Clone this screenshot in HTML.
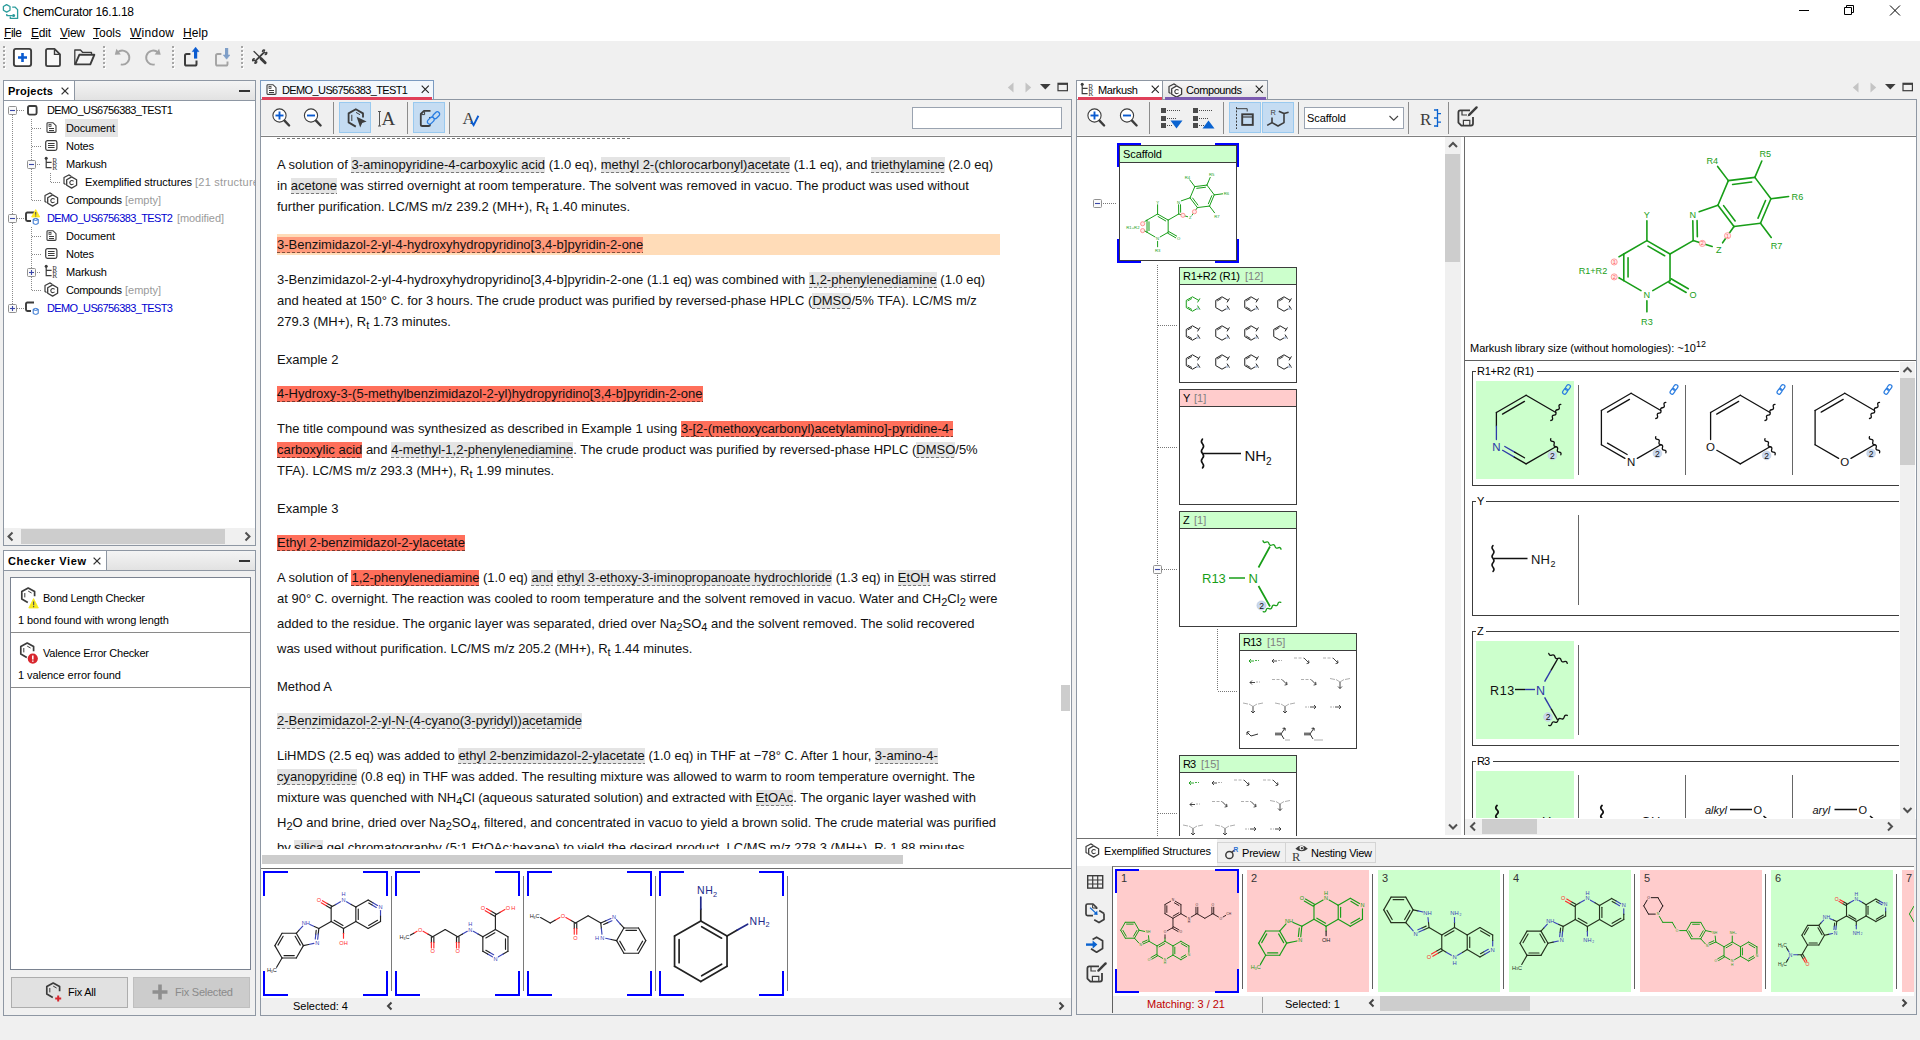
<!DOCTYPE html><html><head><meta charset="utf-8"><title>ChemCurator 16.1.18</title><style>
html,body{margin:0;padding:0}
body{width:1920px;height:1040px;background:#f0f0f0;position:relative;overflow:hidden;font-family:"Liberation Sans",sans-serif;font-size:11px;color:#000}
.b{position:absolute;box-sizing:border-box}
.t{position:absolute;white-space:nowrap;line-height:normal}
svg{overflow:visible}

.dl{position:absolute;left:277px;white-space:nowrap;font-size:13px;line-height:15px;height:15px;color:#111}
.dl span.g,.dl span.r,.dl span.s{padding-bottom:1px;background-repeat:repeat-x;background-position:0 100%;background-size:5px 1px}
.dl span.g{background-color:#e4e4e4;background-image:linear-gradient(90deg,#777 0,#777 3px,transparent 3px)}
.dl span.r{background-color:#ff6f5b;background-image:linear-gradient(90deg,#7a3a30 0,#7a3a30 3px,transparent 3px)}
.dl span.s{background-color:#ff9b7c;background-image:linear-gradient(90deg,#80503c 0,#80503c 3px,transparent 3px)}
.dl sub{font-size:11px;position:relative;top:3px;vertical-align:baseline;line-height:0}

</style></head><body>
<!-- p_top -->
<div class="b" style="left:0px;top:0px;width:1920px;height:41px;background:#ffffff;"></div>
<svg class="b" style="left:2px;top:3px;" width="17" height="17" viewBox="0 0 17 17"><g fill="none" stroke="#2b9c9c" stroke-width="1.3" stroke-linejoin="round">
<path d="M4.6 1.6 L8 3.5 V7.2 L4.6 9.1 L1.4 7.2 V3.5 Z"/>
<path d="M10.2 4.2 H13.2 L15.6 6.6 V15.4 H8.3 V13.6"/>
<path d="M4.8 11 V12.6 H10.6"/></g><circle cx="11.6" cy="12.6" r="1.5" fill="#2b9c9c"/></svg>
<div class="t" style="left:23px;top:5px;font-size:12px;letter-spacing:-0.243px;">ChemCurator 16.1.18</div>
<svg class="b" style="left:1795px;top:0px;" width="120" height="22" viewBox="0 0 120 22"><g fill="none" stroke="#000" stroke-width="1">
<path d="M4 10.5 H14"/>
<path d="M49.5 7.5 H56.5 V14.5 H49.5 Z M51.5 7.5 V5.5 H58.5 V12.5 H56.5"/>
<path d="M95 5.5 L105 15.5 M105 5.5 L95 15.5"/></g></svg>
<div class="t" style="left:4px;top:26px;font-size:12px;letter-spacing:-0.448px;"><span style="text-decoration:underline;text-underline-offset:1px">F</span>ile</div>
<div class="t" style="left:31px;top:26px;font-size:12px;letter-spacing:-0.224px;"><span style="text-decoration:underline;text-underline-offset:1px">E</span>dit</div>
<div class="t" style="left:60px;top:26px;font-size:12px;letter-spacing:-0.266px;"><span style="text-decoration:underline;text-underline-offset:1px">V</span>iew</div>
<div class="t" style="left:93px;top:26px;font-size:12px;letter-spacing:-0.004px;"><span style="text-decoration:underline;text-underline-offset:1px">T</span>ools</div>
<div class="t" style="left:130px;top:26px;font-size:12px;letter-spacing:0.263px;"><span style="text-decoration:underline;text-underline-offset:1px">W</span>indow</div>
<div class="t" style="left:183px;top:26px;font-size:12px;letter-spacing:0.104px;"><span style="text-decoration:underline;text-underline-offset:1px">H</span>elp</div>
<div class="b" style="left:3px;top:46px;width:2px;height:2px;background:#a0a0a0;"></div><div class="b" style="left:4px;top:47px;width:2px;height:2px;background:#ffffff;"></div><div class="b" style="left:3px;top:46px;width:2px;height:2px;background:#a6a6a6;"></div><div class="b" style="left:3px;top:50px;width:2px;height:2px;background:#a0a0a0;"></div><div class="b" style="left:4px;top:51px;width:2px;height:2px;background:#ffffff;"></div><div class="b" style="left:3px;top:50px;width:2px;height:2px;background:#a6a6a6;"></div><div class="b" style="left:3px;top:54px;width:2px;height:2px;background:#a0a0a0;"></div><div class="b" style="left:4px;top:55px;width:2px;height:2px;background:#ffffff;"></div><div class="b" style="left:3px;top:54px;width:2px;height:2px;background:#a6a6a6;"></div><div class="b" style="left:3px;top:58px;width:2px;height:2px;background:#a0a0a0;"></div><div class="b" style="left:4px;top:59px;width:2px;height:2px;background:#ffffff;"></div><div class="b" style="left:3px;top:58px;width:2px;height:2px;background:#a6a6a6;"></div><div class="b" style="left:3px;top:62px;width:2px;height:2px;background:#a0a0a0;"></div><div class="b" style="left:4px;top:63px;width:2px;height:2px;background:#ffffff;"></div><div class="b" style="left:3px;top:62px;width:2px;height:2px;background:#a6a6a6;"></div><div class="b" style="left:3px;top:66px;width:2px;height:2px;background:#a0a0a0;"></div><div class="b" style="left:4px;top:67px;width:2px;height:2px;background:#ffffff;"></div><div class="b" style="left:3px;top:66px;width:2px;height:2px;background:#a6a6a6;"></div>
<div class="b" style="left:103px;top:46px;width:2px;height:2px;background:#a0a0a0;"></div><div class="b" style="left:104px;top:47px;width:2px;height:2px;background:#ffffff;"></div><div class="b" style="left:103px;top:46px;width:2px;height:2px;background:#a6a6a6;"></div><div class="b" style="left:103px;top:50px;width:2px;height:2px;background:#a0a0a0;"></div><div class="b" style="left:104px;top:51px;width:2px;height:2px;background:#ffffff;"></div><div class="b" style="left:103px;top:50px;width:2px;height:2px;background:#a6a6a6;"></div><div class="b" style="left:103px;top:54px;width:2px;height:2px;background:#a0a0a0;"></div><div class="b" style="left:104px;top:55px;width:2px;height:2px;background:#ffffff;"></div><div class="b" style="left:103px;top:54px;width:2px;height:2px;background:#a6a6a6;"></div><div class="b" style="left:103px;top:58px;width:2px;height:2px;background:#a0a0a0;"></div><div class="b" style="left:104px;top:59px;width:2px;height:2px;background:#ffffff;"></div><div class="b" style="left:103px;top:58px;width:2px;height:2px;background:#a6a6a6;"></div><div class="b" style="left:103px;top:62px;width:2px;height:2px;background:#a0a0a0;"></div><div class="b" style="left:104px;top:63px;width:2px;height:2px;background:#ffffff;"></div><div class="b" style="left:103px;top:62px;width:2px;height:2px;background:#a6a6a6;"></div><div class="b" style="left:103px;top:66px;width:2px;height:2px;background:#a0a0a0;"></div><div class="b" style="left:104px;top:67px;width:2px;height:2px;background:#ffffff;"></div><div class="b" style="left:103px;top:66px;width:2px;height:2px;background:#a6a6a6;"></div>
<div class="b" style="left:172px;top:46px;width:2px;height:2px;background:#a0a0a0;"></div><div class="b" style="left:173px;top:47px;width:2px;height:2px;background:#ffffff;"></div><div class="b" style="left:172px;top:46px;width:2px;height:2px;background:#a6a6a6;"></div><div class="b" style="left:172px;top:50px;width:2px;height:2px;background:#a0a0a0;"></div><div class="b" style="left:173px;top:51px;width:2px;height:2px;background:#ffffff;"></div><div class="b" style="left:172px;top:50px;width:2px;height:2px;background:#a6a6a6;"></div><div class="b" style="left:172px;top:54px;width:2px;height:2px;background:#a0a0a0;"></div><div class="b" style="left:173px;top:55px;width:2px;height:2px;background:#ffffff;"></div><div class="b" style="left:172px;top:54px;width:2px;height:2px;background:#a6a6a6;"></div><div class="b" style="left:172px;top:58px;width:2px;height:2px;background:#a0a0a0;"></div><div class="b" style="left:173px;top:59px;width:2px;height:2px;background:#ffffff;"></div><div class="b" style="left:172px;top:58px;width:2px;height:2px;background:#a6a6a6;"></div><div class="b" style="left:172px;top:62px;width:2px;height:2px;background:#a0a0a0;"></div><div class="b" style="left:173px;top:63px;width:2px;height:2px;background:#ffffff;"></div><div class="b" style="left:172px;top:62px;width:2px;height:2px;background:#a6a6a6;"></div><div class="b" style="left:172px;top:66px;width:2px;height:2px;background:#a0a0a0;"></div><div class="b" style="left:173px;top:67px;width:2px;height:2px;background:#ffffff;"></div><div class="b" style="left:172px;top:66px;width:2px;height:2px;background:#a6a6a6;"></div>
<div class="b" style="left:241px;top:46px;width:2px;height:2px;background:#a0a0a0;"></div><div class="b" style="left:242px;top:47px;width:2px;height:2px;background:#ffffff;"></div><div class="b" style="left:241px;top:46px;width:2px;height:2px;background:#a6a6a6;"></div><div class="b" style="left:241px;top:50px;width:2px;height:2px;background:#a0a0a0;"></div><div class="b" style="left:242px;top:51px;width:2px;height:2px;background:#ffffff;"></div><div class="b" style="left:241px;top:50px;width:2px;height:2px;background:#a6a6a6;"></div><div class="b" style="left:241px;top:54px;width:2px;height:2px;background:#a0a0a0;"></div><div class="b" style="left:242px;top:55px;width:2px;height:2px;background:#ffffff;"></div><div class="b" style="left:241px;top:54px;width:2px;height:2px;background:#a6a6a6;"></div><div class="b" style="left:241px;top:58px;width:2px;height:2px;background:#a0a0a0;"></div><div class="b" style="left:242px;top:59px;width:2px;height:2px;background:#ffffff;"></div><div class="b" style="left:241px;top:58px;width:2px;height:2px;background:#a6a6a6;"></div><div class="b" style="left:241px;top:62px;width:2px;height:2px;background:#a0a0a0;"></div><div class="b" style="left:242px;top:63px;width:2px;height:2px;background:#ffffff;"></div><div class="b" style="left:241px;top:62px;width:2px;height:2px;background:#a6a6a6;"></div><div class="b" style="left:241px;top:66px;width:2px;height:2px;background:#a0a0a0;"></div><div class="b" style="left:242px;top:67px;width:2px;height:2px;background:#ffffff;"></div><div class="b" style="left:241px;top:66px;width:2px;height:2px;background:#a6a6a6;"></div>
<svg class="b" style="left:10px;top:44px;" width="270" height="28" viewBox="0 0 270 28">
<rect x="3.9" y="4.9" width="17.2" height="17.2" rx="2" fill="#fff" stroke="#3c3c3c" stroke-width="1.9"/>
<path d="M8 13.5 H17 M12.5 9 V18" stroke="#0a5bd0" stroke-width="2.6" fill="none"/>
<path d="M36 6.5 Q36 4.9 37.6 4.9 H44.5 L50 10.4 V20.5 Q50 22.1 48.4 22.1 H37.6 Q36 22.1 36 20.5 Z" fill="#f8f8f8" stroke="#3c3c3c" stroke-width="1.8" stroke-linejoin="round"/>
<path d="M44.5 5.5 V10.4 H49.5" fill="none" stroke="#3c3c3c" stroke-width="1.4"/>
<path d="M64.8 20.5 V6 H70.5 L72.5 8.3 H81.5 V10.2" fill="none" stroke="#3c3c3c" stroke-width="1.3" stroke-linejoin="round"/>
<path d="M65.2 20.4 L69.3 10.8 H84.3 L80.3 20.4 Z" fill="#f4f4f4" stroke="#3c3c3c" stroke-width="1.9" stroke-linejoin="round"/>
<path d="M107.4 8.6 A7 7 0 1 1 110.8 20.4" fill="none" stroke="#a3a3a3" stroke-width="1.9"/>
<path d="M104.8 10.8 L110.8 10.6 L106.4 4.8 Z" fill="#a3a3a3"/>
<path d="M148.1 8.6 A7 7 0 1 0 144.7 20.4" fill="none" stroke="#a3a3a3" stroke-width="1.9"/>
<path d="M150.7 10.8 L144.7 10.6 L149.1 4.8 Z" fill="#a3a3a3"/>
<path d="M180.4 10 H176.6 Q175 10 175 11.6 V19.9 Q175 21.5 176.6 21.5 H184.9 Q186.5 21.5 186.5 19.9 V16.6" fill="none" stroke="#3c3c3c" stroke-width="2"/>
<path d="M185.6 14.6 V6" stroke="#0a5bd0" stroke-width="3.2" fill="none"/><path d="M182.3 7.6 L185.6 3.2 L188.9 7.6 Z" fill="#0a5bd0" stroke="#0a5bd0" stroke-width="0.6" stroke-linejoin="round"/>
<path d="M211.4 10 H207.6 Q206 10 206 11.6 V19.9 Q206 21.5 207.6 21.5 H215.9 Q217.5 21.5 217.5 19.9 V17.6" fill="none" stroke="#a3a3a3" stroke-width="1.9"/>
<path d="M216.6 4 V12" stroke="#7f9fc8" stroke-width="3.2" fill="none"/><path d="M213.3 11 L216.6 15.2 L219.9 11 Z" fill="#7f9fc8" stroke="#7f9fc8" stroke-width="0.6" stroke-linejoin="round"/>
<g stroke="#3c3c3c" fill="none" stroke-linecap="round" transform="translate(249.8 12.7) scale(0.87) translate(-250 -12.4)">
<path d="M243.4 6.4 L250.6 13.6" stroke-width="1.5"/><path d="M251.4 14.6 L256.2 19.4" stroke-width="3.3"/>
<path d="M245.6 16.6 L254 8.2" stroke-width="2.1"/>
<path d="M253 6.2 Q253.4 4.2 255.6 4.8 L254.6 7 L256 8.2 L258 7.4 Q258.4 9.6 256.2 10" stroke-width="1.5" stroke-linejoin="round"/>
<path d="M246.6 18.2 Q246.4 20.4 244.2 19.8 L245.2 17.6 L243.8 16.4 L241.8 17.2 Q241.4 15 243.6 14.6" stroke-width="1.5" stroke-linejoin="round"/></g>
</svg>
<!-- p_left -->
<div class="b" style="left:3px;top:80px;width:253px;height:466px;background:#fff;border:1px solid #8e97a3;"></div>
<div class="b" style="left:3px;top:80px;width:253px;height:21px;background:linear-gradient(#f4f4f4,#e2e2e2);border:1px solid #8e97a3;"></div><div class="b" style="left:4px;top:81px;width:71px;height:19px;background:#fff;border-right:1px solid #8e97a3;"></div><div class="t" style="left:8px;top:85px;font-size:11px;letter-spacing:0.223px;font-weight:bold;">Projects</div><svg class="b" style="left:61px;top:87px;" width="8" height="8" viewBox="0 0 8 8"><path d="M0.6 0.6 L7.4 7.4 M7.4 0.6 L0.6 7.4" stroke="#333" stroke-width="1.3" fill="none"/></svg><div class="b" style="left:239px;top:90px;width:11px;height:2px;background:#333;"></div>
<svg class="b" style="left:0px;top:0px;" width="256" height="546" viewBox="0 0 256 546"><path d="M12.5 115 V304" stroke="#8a8a8a" stroke-width="1" stroke-dasharray="1 1" fill="none"/><path d="M17 110.5 H24" stroke="#8a8a8a" stroke-width="1" stroke-dasharray="1 1" fill="none"/><path d="M17 218.5 H24" stroke="#8a8a8a" stroke-width="1" stroke-dasharray="1 1" fill="none"/><path d="M17 308.5 H24" stroke="#8a8a8a" stroke-width="1" stroke-dasharray="1 1" fill="none"/><path d="M31.5 119 V160" stroke="#8a8a8a" stroke-width="1" stroke-dasharray="1 1" fill="none"/><path d="M31.5 169 V200" stroke="#8a8a8a" stroke-width="1" stroke-dasharray="1 1" fill="none"/><path d="M32 128.5 H41" stroke="#8a8a8a" stroke-width="1" stroke-dasharray="1 1" fill="none"/><path d="M32 146.5 H41" stroke="#8a8a8a" stroke-width="1" stroke-dasharray="1 1" fill="none"/><path d="M37 164.5 H41" stroke="#8a8a8a" stroke-width="1" stroke-dasharray="1 1" fill="none"/><path d="M32 200.5 H41" stroke="#8a8a8a" stroke-width="1" stroke-dasharray="1 1" fill="none"/><path d="M50.5 173 V182" stroke="#8a8a8a" stroke-width="1" stroke-dasharray="1 1" fill="none"/><path d="M51 182.5 H61" stroke="#8a8a8a" stroke-width="1" stroke-dasharray="1 1" fill="none"/><path d="M31.5 227 V268" stroke="#8a8a8a" stroke-width="1" stroke-dasharray="1 1" fill="none"/><path d="M31.5 277 V290" stroke="#8a8a8a" stroke-width="1" stroke-dasharray="1 1" fill="none"/><path d="M32 236.5 H41" stroke="#8a8a8a" stroke-width="1" stroke-dasharray="1 1" fill="none"/><path d="M32 254.5 H41" stroke="#8a8a8a" stroke-width="1" stroke-dasharray="1 1" fill="none"/><path d="M37 272.5 H41" stroke="#8a8a8a" stroke-width="1" stroke-dasharray="1 1" fill="none"/><path d="M32 290.5 H41" stroke="#8a8a8a" stroke-width="1" stroke-dasharray="1 1" fill="none"/></svg>
<svg class="b" style="left:8px;top:106px;" width="16" height="16" viewBox="0 0 16 16"><rect x="0.5" y="0.5" width="8" height="8" rx="1" fill="#fafafa" stroke="#919191" stroke-width="1"/><path d="M2 4.5 H7" stroke="#3a46a8" stroke-width="1.1"/></svg>
<svg class="b" style="left:27px;top:105px;" width="16" height="16" viewBox="0 0 16 16"><rect x="1" y="1" width="8.6" height="8.6" rx="1.5" fill="#fff" stroke="#3c3c3c" stroke-width="1.9"/></svg>
<div class="t" style="left:47px;top:104px;font-size:11px;letter-spacing:-0.613px;">DEMO_US6756383_TEST1</div>
<div class="b" style="left:65px;top:119px;width:53px;height:18px;background:#e4e4e4;"></div>
<svg class="b" style="left:46px;top:122px;" width="16" height="16" viewBox="0 0 16 16"><path d="M1 1.6 Q1 0.7 1.9 0.7 H7 L10 3.7 V9.5 Q10 10.4 9.1 10.4 H1.9 Q1 10.4 1 9.5 Z" fill="#fff" stroke="#3c3c3c" stroke-width="1.1"/><path d="M3 6.5 H8 M3 8.5 H8" stroke="#3c3c3c" stroke-width="1"/><rect x="3" y="2.5" width="2" height="2" fill="none" stroke="#3c3c3c" stroke-width="0.8"/></svg>
<div class="t" style="left:66px;top:122px;font-size:11px;letter-spacing:-0.165px;">Document</div>
<svg class="b" style="left:45px;top:140px;" width="16" height="16" viewBox="0 0 16 16"><rect x="0.7" y="0.6" width="11.2" height="9.8" rx="1.8" fill="#fff" stroke="#3c3c3c" stroke-width="1.2"/><path d="M3 3.5 H9.6 M3 5.5 H9.6 M3 7.5 H9.6" stroke="#3c3c3c" stroke-width="1"/></svg>
<div class="t" style="left:66px;top:140px;font-size:11px;letter-spacing:-0.188px;">Notes</div>
<svg class="b" style="left:27px;top:160px;" width="16" height="16" viewBox="0 0 16 16"><rect x="0.5" y="0.5" width="8" height="8" rx="1" fill="#fafafa" stroke="#919191" stroke-width="1"/><path d="M2 4.5 H7" stroke="#3a46a8" stroke-width="1.1"/></svg>
<svg class="b" style="left:44px;top:156px;" width="16" height="16" viewBox="0 0 16 16"><circle cx="2.2" cy="2.2" r="1.5" fill="#3c3c3c"/><path d="M2.2 2.5 V11.6 H7.6 M2.2 6.4 H7.6" fill="none" stroke="#3c3c3c" stroke-width="1.2"/><text x="8.2" y="8.4" font-family="Liberation Serif,serif" font-size="7.5" fill="#3c3c3c">R</text><text x="8.2" y="13.9" font-family="Liberation Serif,serif" font-size="7.5" fill="#3c3c3c">R</text></svg>
<div class="t" style="left:66px;top:158px;font-size:11px;letter-spacing:-0.198px;">Markush</div>
<svg class="b" style="left:63px;top:174px;" width="16" height="16" viewBox="0 0 16 16"><path d="M2.6 10.6 L1 9.6 V3.6 L5.8 0.9 L8.2 2.2" fill="none" stroke="#3c3c3c" stroke-width="1.2" stroke-linejoin="round"/><path d="M8.6 2.9 L13.6 5.7 V11.3 L8.6 14.1 L3.7 11.3 V5.7 Z" fill="#fff" stroke="#3c3c3c" stroke-width="1.3" stroke-linejoin="round"/><path d="M10.6 7.2 Q8.6 5.8 7.2 7.4 Q6.3 8.6 7.2 9.8 Q8.6 11.3 10.6 9.9" fill="none" stroke="#3c3c3c" stroke-width="1.1"/></svg>
<div class="t" style="left:85px;top:176px;font-size:11px;letter-spacing:-0.060px;">Exemplified structures</div>
<div class="b" style="left:195px;top:177px;width:60px;height:14px;overflow:hidden;"><div class="t" style="left:0px;top:-1px;font-size:11px;letter-spacing:0.232px;color:#9a9a9a;">[21 structures]</div></div>
<svg class="b" style="left:44px;top:192px;" width="16" height="16" viewBox="0 0 16 16"><path d="M2.6 10.6 L1 9.6 V3.6 L5.8 0.9 L8.2 2.2" fill="none" stroke="#3c3c3c" stroke-width="1.2" stroke-linejoin="round"/><path d="M8.6 2.9 L13.6 5.7 V11.3 L8.6 14.1 L3.7 11.3 V5.7 Z" fill="#fff" stroke="#3c3c3c" stroke-width="1.3" stroke-linejoin="round"/><path d="M10.6 7.2 Q8.6 5.8 7.2 7.4 Q6.3 8.6 7.2 9.8 Q8.6 11.3 10.6 9.9" fill="none" stroke="#3c3c3c" stroke-width="1.1"/></svg>
<div class="t" style="left:66px;top:194px;font-size:11px;letter-spacing:-0.418px;">Compounds</div>
<div class="t" style="left:125px;top:194px;font-size:11px;letter-spacing:-0.016px;color:#9a9a9a;">[empty]</div>
<svg class="b" style="left:8px;top:214px;" width="16" height="16" viewBox="0 0 16 16"><rect x="0.5" y="0.5" width="8" height="8" rx="1" fill="#fafafa" stroke="#919191" stroke-width="1"/><path d="M2 4.5 H7" stroke="#3a46a8" stroke-width="1.1"/></svg>
<svg class="b" style="left:25px;top:211px;" width="16" height="16" viewBox="0 0 16 16"><path d="M9 1.5 H2.4 Q1 1.5 1 2.9 V8.6 Q1 10 2.4 10 H6" fill="none" stroke="#3c3c3c" stroke-width="1.9"/><path d="M8.2 8.2 Q10.7 6.6 13.2 8.2 V12.6 Q10.7 14.2 8.2 12.6 Z M8.2 8.6 Q10.7 10.2 13.2 8.6" fill="#fff" stroke="#2a6fd0" stroke-width="1"/><path d="M10.7 -1.4 L14.8 6 H6.6 Z" fill="#ffe920" stroke="#ffe920" stroke-width="0.8" stroke-linejoin="round"/><path d="M10.7 1 V3.8 M10.7 4.6 V5.5" stroke="#555" stroke-width="1.1"/></svg>
<div class="t" style="left:47px;top:212px;font-size:11px;letter-spacing:-0.613px;color:#0000d0;">DEMO_US6756383_TEST2</div>
<div class="t" style="left:177px;top:212px;font-size:11px;letter-spacing:-0.080px;color:#9a9a9a;">[modified]</div>
<svg class="b" style="left:46px;top:230px;" width="16" height="16" viewBox="0 0 16 16"><path d="M1 1.6 Q1 0.7 1.9 0.7 H7 L10 3.7 V9.5 Q10 10.4 9.1 10.4 H1.9 Q1 10.4 1 9.5 Z" fill="#fff" stroke="#3c3c3c" stroke-width="1.1"/><path d="M3 6.5 H8 M3 8.5 H8" stroke="#3c3c3c" stroke-width="1"/><rect x="3" y="2.5" width="2" height="2" fill="none" stroke="#3c3c3c" stroke-width="0.8"/></svg>
<div class="t" style="left:66px;top:230px;font-size:11px;letter-spacing:-0.165px;">Document</div>
<svg class="b" style="left:45px;top:248px;" width="16" height="16" viewBox="0 0 16 16"><rect x="0.7" y="0.6" width="11.2" height="9.8" rx="1.8" fill="#fff" stroke="#3c3c3c" stroke-width="1.2"/><path d="M3 3.5 H9.6 M3 5.5 H9.6 M3 7.5 H9.6" stroke="#3c3c3c" stroke-width="1"/></svg>
<div class="t" style="left:66px;top:248px;font-size:11px;letter-spacing:-0.188px;">Notes</div>
<svg class="b" style="left:27px;top:268px;" width="16" height="16" viewBox="0 0 16 16"><rect x="0.5" y="0.5" width="8" height="8" rx="1" fill="#fafafa" stroke="#919191" stroke-width="1"/><path d="M2 4.5 H7" stroke="#3a46a8" stroke-width="1.1"/><path d="M4.5 2 V7" stroke="#3a46a8" stroke-width="1.1"/></svg>
<svg class="b" style="left:44px;top:264px;" width="16" height="16" viewBox="0 0 16 16"><circle cx="2.2" cy="2.2" r="1.5" fill="#3c3c3c"/><path d="M2.2 2.5 V11.6 H7.6 M2.2 6.4 H7.6" fill="none" stroke="#3c3c3c" stroke-width="1.2"/><text x="8.2" y="8.4" font-family="Liberation Serif,serif" font-size="7.5" fill="#3c3c3c">R</text><text x="8.2" y="13.9" font-family="Liberation Serif,serif" font-size="7.5" fill="#3c3c3c">R</text></svg>
<div class="t" style="left:66px;top:266px;font-size:11px;letter-spacing:-0.198px;">Markush</div>
<svg class="b" style="left:44px;top:282px;" width="16" height="16" viewBox="0 0 16 16"><path d="M2.6 10.6 L1 9.6 V3.6 L5.8 0.9 L8.2 2.2" fill="none" stroke="#3c3c3c" stroke-width="1.2" stroke-linejoin="round"/><path d="M8.6 2.9 L13.6 5.7 V11.3 L8.6 14.1 L3.7 11.3 V5.7 Z" fill="#fff" stroke="#3c3c3c" stroke-width="1.3" stroke-linejoin="round"/><path d="M10.6 7.2 Q8.6 5.8 7.2 7.4 Q6.3 8.6 7.2 9.8 Q8.6 11.3 10.6 9.9" fill="none" stroke="#3c3c3c" stroke-width="1.1"/></svg>
<div class="t" style="left:66px;top:284px;font-size:11px;letter-spacing:-0.418px;">Compounds</div>
<div class="t" style="left:125px;top:284px;font-size:11px;letter-spacing:-0.016px;color:#9a9a9a;">[empty]</div>
<svg class="b" style="left:8px;top:304px;" width="16" height="16" viewBox="0 0 16 16"><rect x="0.5" y="0.5" width="8" height="8" rx="1" fill="#fafafa" stroke="#919191" stroke-width="1"/><path d="M2 4.5 H7" stroke="#3a46a8" stroke-width="1.1"/><path d="M4.5 2 V7" stroke="#3a46a8" stroke-width="1.1"/></svg>
<svg class="b" style="left:25px;top:301px;" width="16" height="16" viewBox="0 0 16 16"><path d="M9 1.5 H2.4 Q1 1.5 1 2.9 V8.6 Q1 10 2.4 10 H6" fill="none" stroke="#3c3c3c" stroke-width="1.9"/><path d="M8.2 8.2 Q10.7 6.6 13.2 8.2 V12.6 Q10.7 14.2 8.2 12.6 Z M8.2 8.6 Q10.7 10.2 13.2 8.6" fill="#fff" stroke="#2a6fd0" stroke-width="1"/></svg>
<div class="t" style="left:47px;top:302px;font-size:11px;letter-spacing:-0.613px;color:#0000d0;">DEMO_US6756383_TEST3</div>
<div class="b" style="left:4px;top:528px;width:251px;height:17px;background:#f0f0f0;"></div>
<div class="b" style="left:21px;top:529px;width:204px;height:15px;background:#cdcdcd;"></div>
<svg class="b" style="left:4px;top:528px;" width="251" height="17" viewBox="0 0 251 17"><path d="M8.5 4.5 L4.5 8.5 L8.5 12.5 M241.5 4.5 L245.5 8.5 L241.5 12.5" fill="none" stroke="#505050" stroke-width="2"/></svg>
<div class="b" style="left:3px;top:550px;width:253px;height:466px;background:#f0f0f0;border:1px solid #8e97a3;"></div>
<div class="b" style="left:3px;top:550px;width:253px;height:21px;background:linear-gradient(#f4f4f4,#e2e2e2);border:1px solid #8e97a3;"></div><div class="b" style="left:4px;top:551px;width:103px;height:19px;background:#fff;border-right:1px solid #8e97a3;"></div><div class="t" style="left:8px;top:555px;font-size:11px;letter-spacing:0.601px;font-weight:bold;">Checker View</div><svg class="b" style="left:93px;top:557px;" width="8" height="8" viewBox="0 0 8 8"><path d="M0.6 0.6 L7.4 7.4 M7.4 0.6 L0.6 7.4" stroke="#333" stroke-width="1.3" fill="none"/></svg><div class="b" style="left:239px;top:560px;width:11px;height:2px;background:#333;"></div>
<div class="b" style="left:10px;top:577px;width:241px;height:393px;background:#fff;border:1px solid #7a8290;"></div>
<div class="b" style="left:11px;top:632px;width:239px;height:1px;background:#8a8a8a;"></div>
<div class="b" style="left:11px;top:687px;width:239px;height:1px;background:#8a8a8a;"></div>
<svg class="b" style="left:20px;top:587px;" width="20" height="24" viewBox="0 0 20 24"><path d="M7.8 15.4 L1.8 12 V4.6 L8.2 1 L14.6 4.6 V9.2" fill="none" stroke="#3c3c3c" stroke-width="1.7" stroke-linejoin="round"/><path d="M4.8 10.4 V6 M8.2 4.1 L11.6 6" stroke="#3c3c3c" stroke-width="1"/><path d="M13.6 11.6 L18.4 21 H8.8 Z" fill="#f7ea1e" stroke="#f7ea1e" stroke-width="0.8" stroke-linejoin="round"/><path d="M13.6 14.6 V18.2 M13.6 19 V20.2" stroke="#555" stroke-width="1.2"/></svg>
<div class="t" style="left:43px;top:592px;font-size:11px;letter-spacing:-0.250px;">Bond Length Checker</div>
<div class="t" style="left:18px;top:614px;font-size:11px;letter-spacing:-0.070px;">1 bond found with wrong length</div>
<svg class="b" style="left:19px;top:642px;" width="20" height="24" viewBox="0 0 20 24"><path d="M7.8 15.4 L1.8 12 V4.6 L8.2 1 L14.6 4.6 V9.2" fill="none" stroke="#3c3c3c" stroke-width="1.7" stroke-linejoin="round"/><path d="M4.8 10.4 V6 M8.2 4.1 L11.6 6" stroke="#3c3c3c" stroke-width="1"/><circle cx="13.8" cy="16.6" r="5.1" fill="#d8262e"/><path d="M13.8 13.4 V17.4 M13.8 18.5 V19.8" stroke="#fff" stroke-width="1.5"/></svg>
<div class="t" style="left:43px;top:647px;font-size:11px;letter-spacing:-0.225px;">Valence Error Checker</div>
<div class="t" style="left:18px;top:669px;font-size:11px;letter-spacing:-0.052px;">1 valence error found</div>
<div class="b" style="left:11px;top:977px;width:117px;height:31px;background:#e1e1e1;border:1px solid #adadad;"></div>
<svg class="b" style="left:45px;top:982px;" width="20" height="24" viewBox="0 0 20 24"><path d="M7.8 15.4 L1.8 12 V4.6 L8.2 1 L14.6 4.6 V9.2" fill="none" stroke="#3c3c3c" stroke-width="1.7" stroke-linejoin="round"/><path d="M4.8 10.4 V6 M8.2 4.1 L11.6 6" stroke="#3c3c3c" stroke-width="1"/><path d="M13.2 13.6 V19.6 M10.2 16.6 H16.2" stroke="#d8262e" stroke-width="2"/></svg>
<div class="t" style="left:68px;top:986px;font-size:11px;letter-spacing:-0.221px;">Fix All</div>
<div class="b" style="left:133px;top:977px;width:117px;height:31px;background:#cccccc;border:1px solid #bfbfbf;"></div>
<svg class="b" style="left:152px;top:984px;" width="16" height="16" viewBox="0 0 16 16"><path d="M8 0.5 V15.5 M0.5 8 H15.5" stroke="#8f8f8f" stroke-width="3.6"/></svg>
<div class="t" style="left:175px;top:986px;font-size:11px;letter-spacing:-0.233px;color:#8a8a8a;">Fix Selected</div>
<!-- p_center -->
<div class="b" style="left:260px;top:80px;width:174px;height:20px;background:#f2f7fc;border:1px solid #7a9ac0;border-bottom:none;"></div>
<div class="b" style="left:262px;top:97px;width:170px;height:3px;background:#e0405a;"></div>
<svg class="b" style="left:266px;top:84px;" width="12" height="12" viewBox="0 0 12 12"><path d="M1 1.6 Q1 0.7 1.9 0.7 H7 L10 3.7 V9.5 Q10 10.4 9.1 10.4 H1.9 Q1 10.4 1 9.5 Z" fill="#fff" stroke="#3c3c3c" stroke-width="1.1"/><path d="M3 6.5 H8 M3 8.5 H8" stroke="#3c3c3c" stroke-width="1"/><rect x="3" y="2.5" width="2" height="2" fill="none" stroke="#3c3c3c" stroke-width="0.8"/></svg>
<div class="t" style="left:282px;top:84px;font-size:11px;letter-spacing:-0.613px;">DEMO_US6756383_TEST1</div>
<svg class="b" style="left:421px;top:85px;" width="9" height="9" viewBox="0 0 9 9"><path d="M0.7 0.7 L7.8 7.8 M7.8 0.7 L0.7 7.8" stroke="#222" stroke-width="1.1" fill="none"/></svg>
<svg class="b" style="left:1007px;top:82px;" width="64" height="12" viewBox="0 0 64 12"><path d="M6.5 0.5 V10.5 L0.8 5.5 Z" fill="#c4c4c4"/><path d="M18.5 0.5 V10.5 L24.2 5.5 Z" fill="#c4c4c4"/><path d="M33 2 H43.6 L38.3 7.6 Z" fill="#3c3c3c"/><rect x="51" y="1.3" width="9.4" height="7.4" fill="none" stroke="#3c3c3c" stroke-width="1.2"/><path d="M51 2 H60.4" stroke="#3c3c3c" stroke-width="1.8"/></svg>
<div class="b" style="left:260px;top:99px;width:812px;height:917px;background:#f0f0f0;border:1px solid #8e97a3;"></div>
<div class="b" style="left:262px;top:97px;width:170px;height:3px;background:#e0405a;"></div>
<div class="b" style="left:261px;top:136px;width:810px;height:1px;background:#808080;"></div>
<div class="b" style="left:261px;top:135px;width:810px;height:1px;background:#f8f8f8;"></div>
<div class="b" style="left:339px;top:102px;width:32px;height:31px;background:#c5dcf2;border:1px solid #99c9ef;"></div>
<div class="b" style="left:413px;top:102px;width:32px;height:31px;background:#c5dcf2;border:1px solid #99c9ef;"></div>
<div class="b" style="left:333px;top:102px;width:1px;height:32px;background:#8c8c8c;"></div>
<div class="b" style="left:407px;top:102px;width:1px;height:32px;background:#8c8c8c;"></div>
<div class="b" style="left:449px;top:102px;width:1px;height:32px;background:#8c8c8c;"></div>
<svg class="b" style="left:260px;top:100px;" width="240" height="36" viewBox="0 0 240 36"><circle cx="19.5" cy="15.5" r="6.6" fill="#fff" stroke="#3c3c3c" stroke-width="1.1"/><path d="M24.5 20.7 L29.1 25.5" stroke="#3c3c3c" stroke-width="2.4" stroke-linecap="round"/><path d="M15.5 15.5 H23.5" stroke="#0a5bd0" stroke-width="1.9"/><path d="M19.5 11.5 V19.5" stroke="#0a5bd0" stroke-width="1.9"/><circle cx="51" cy="15.5" r="6.6" fill="#fff" stroke="#3c3c3c" stroke-width="1.1"/><path d="M56 20.7 L60.6 25.5" stroke="#3c3c3c" stroke-width="2.4" stroke-linecap="round"/><path d="M47 15.5 H55" stroke="#0a5bd0" stroke-width="1.9"/><path d="M95.8 26.6 L88.6 22.4 V13.4 L95.8 9.2 L103 13.4 V17.5" fill="none" stroke="#3c3c3c" stroke-width="1.8" stroke-linejoin="round"/><path d="M91.8 21 V14.8 M96 12.4 L100 14.7" stroke="#3c3c3c" stroke-width="1"/><path d="M96.6 16.8 L106.6 21.6 L102.2 23 L100.2 27.4 Z" fill="#3c3c3c"/><path d="M119.5 11.5 V26 M118 11.5 H121 M118 26 H121" stroke="#555" stroke-width="1" fill="none"/><text x="121.6" y="25.4" font-family="Liberation Serif,serif" font-size="19" fill="#3c3c3c">A</text><path d="M170 17 V24.4 Q170 26 168.4 26 H162.4 Q160.8 26 160.8 24.4 V14 L164 10.8 H170.5" fill="none" stroke="#3c3c3c" stroke-width="1.8" stroke-linejoin="round"/><path d="M161.5 14.6 H164.6 V11.4" fill="none" stroke="#3c3c3c" stroke-width="1"/><g fill="#c5dcf2" stroke="#2a7de1" stroke-width="1.3"><rect x="-2.3" y="-3.9" width="4.6" height="7.8" rx="2.3" transform="translate(176.2 15.2) rotate(45)"/><rect x="-2.3" y="-3.9" width="4.6" height="7.8" rx="2.3" transform="translate(170.8 20.6) rotate(45)"/></g><text x="202.6" y="23.5" font-family="Liberation Serif,serif" font-size="17" fill="#3c3c3c">A</text><path d="M211 21.2 L213.6 25.2 L218.4 15.8" fill="none" stroke="#0a5bd0" stroke-width="1.9"/></svg>
<div class="b" style="left:912px;top:107px;width:150px;height:22px;background:#fff;border:1px solid #9aa3b0;"></div>
<div class="b" style="left:261px;top:137px;width:810px;height:731px;background:#fff;"></div>
<div class="b" style="left:0;top:0;width:1061px;height:849px;overflow:hidden"><div class="b" style="left:277px;top:138px;width:353px;height:1px;background:linear-gradient(90deg,#777 0,#777 3px,transparent 3px) 0 0/5px 1px repeat-x"></div><div class="b" style="left:277px;top:234px;width:723px;height:21px;background:#ffdcb8;"></div><div class="dl" style="top:157px">A solution of <span class="g">3-aminopyridine-4-carboxylic acid</span> (1.0 eq), <span class="g">methyl 2-(chlorocarbonyl)acetate</span> (1.1 eq), and <span class="g">triethylamine</span> (2.0 eq)</div><div class="dl" style="top:178px">in <span class="g">acetone</span> was stirred overnight at room temperature. The solvent was removed in vacuo. The product was used without</div><div class="dl" style="top:199px">further purification. LC/MS m/z 239.2 (MH+), R<sub>t</sub> 1.40 minutes.</div><div class="dl" style="top:237px"><span class="s">3-Benzimidazol-2-yl-4-hydroxyhydropyridino[3,4-b]pyridin-2-one</span></div><div class="dl" style="top:272px">3-Benzimidazol-2-yl-4-hydroxyhydropyridino[3,4-b]pyridin-2-one (1.1 eq) was combined with <span class="g">1,2-phenylenediamine</span> (1.0 eq)</div><div class="dl" style="top:293px">and heated at 150° C. for 3 hours. The crude product was purified by reversed-phase HPLC (<span class="g">DMSO</span>/5% TFA). LC/MS m/z</div><div class="dl" style="top:314px">279.3 (MH+), R<sub>t</sub> 1.73 minutes.</div><div class="dl" style="top:352px">Example 2</div><div class="dl" style="top:386px"><span class="r">4-Hydroxy-3-(5-methylbenzimidazol-2-yl)hydropyridino[3,4-b]pyridin-2-one</span></div><div class="dl" style="top:421px">The title compound was synthesized as described in Example 1 using <span class="r">3-[2-(methoxycarbonyl)acetylamino]-pyridine-4-</span></div><div class="dl" style="top:442px"><span class="r">carboxylic acid</span> and <span class="g">4-methyl-1,2-phenylenediamine</span>. The crude product was purified by reversed-phase HPLC (<span class="g">DMSO</span>/5%</div><div class="dl" style="top:463px">TFA). LC/MS m/z 293.3 (MH+), R<sub>t</sub> 1.99 minutes.</div><div class="dl" style="top:501px">Example 3</div><div class="dl" style="top:535px"><span class="r">Ethyl 2-benzimidazol-2-ylacetate</span></div><div class="dl" style="top:570px">A solution of <span class="r">1,2-phenylenediamine</span> (1.0 eq) <span class="g">and</span> <span class="g">ethyl 3-ethoxy-3-iminopropanoate hydrochloride</span> (1.3 eq) in <span class="g">EtOH</span> was stirred</div><div class="dl" style="top:591px">at 90° C. overnight. The reaction was cooled to room temperature and the solvent removed in vacuo. Water and CH<sub>2</sub>Cl<sub>2</sub> were</div><div class="dl" style="top:616px">added to the residue. The organic layer was separated, dried over Na<sub>2</sub>SO<sub>4</sub> and the solvent removed. The solid recovered</div><div class="dl" style="top:641px">was used without purification. LC/MS m/z 205.2 (MH+), R<sub>t</sub> 1.44 minutes.</div><div class="dl" style="top:679px">Method A</div><div class="dl" style="top:713px"><span class="g">2-Benzimidazol-2-yl-N-(4-cyano(3-pyridyl))acetamide</span></div><div class="dl" style="top:748px">LiHMDS (2.5 eq) was added to <span class="g">ethyl 2-benzimidazol-2-ylacetate</span> (1.0 eq) in THF at −78° C. After 1 hour, <span class="g">3-amino-4-</span></div><div class="dl" style="top:769px"><span class="g">cyanopyridine</span> (0.8 eq) in THF was added. The resulting mixture was allowed to warm to room temperature overnight. The</div><div class="dl" style="top:790px">mixture was quenched with NH<sub>4</sub>Cl (aqueous saturated solution) and extracted with <span class="g">EtOAc</span>. The organic layer washed with</div><div class="dl" style="top:815px">H<sub>2</sub>O and brine, dried over Na<sub>2</sub>SO<sub>4</sub>, filtered, and concentrated in vacuo to yield a brown solid. The crude material was purified</div><div class="dl" style="top:840px">by <span class="g">silica</span> gel chromatography (5:1 EtOAc:hexane) to yield the desired product. LC/MS m/z 278.3 (MH+), R<sub>t</sub> 1.88 minutes.</div></div>
<div class="b" style="left:1061px;top:685px;width:9px;height:26px;background:#cdcdcd;"></div>
<div class="b" style="left:262px;top:855px;width:641px;height:9px;background:#cdcdcd;"></div>
<div class="b" style="left:261px;top:868px;width:810px;height:1px;background:#6e6e6e;"></div>
<div class="b" style="left:261px;top:869px;width:810px;height:129px;background:#fff;"></div>
<svg class="b" style="left:0px;top:0px;" width="1080" height="1000" viewBox="0 0 1080 1000"><path d="M264 895 V872 H287 M364 872 H387 V895 M264 972 V995 H287 M364 995 H387 V972" fill="none" stroke="#0000ff" stroke-width="2" stroke-linecap="square"/><path d="M391.5 876 V991" stroke="#7a7a7a" stroke-width="1"/><path d="M396 895 V872 H419 M496 872 H519 V895 M396 972 V995 H419 M496 995 H519 V972" fill="none" stroke="#0000ff" stroke-width="2" stroke-linecap="square"/><path d="M523.5 876 V991" stroke="#7a7a7a" stroke-width="1"/><path d="M528 895 V872 H551 M628 872 H651 V895 M528 972 V995 H551 M628 995 H651 V972" fill="none" stroke="#0000ff" stroke-width="2" stroke-linecap="square"/><path d="M655.5 876 V991" stroke="#7a7a7a" stroke-width="1"/><path d="M660 895 V872 H683 M760 872 H783 V895 M660 972 V995 H683 M760 995 H783 V972" fill="none" stroke="#0000ff" stroke-width="2" stroke-linecap="square"/><path d="M787.5 876 V991" stroke="#7a7a7a" stroke-width="1"/><g fill="none" stroke-width="1.15" stroke-linecap="round"><path d="M346.51 901.74L351.17 904.43" stroke="#3a44b8"/><path d="M351.17 904.43L355.84 907.12" stroke="#222222"/><path d="M355.84 907.12L355.84 921.38" stroke="#222222"/><path d="M358.26 909.12L358.26 919.38" stroke="#222222"/><path d="M355.84 921.38L343.5 928.5" stroke="#222222"/><path d="M343.5 928.5L331.16 921.38" stroke="#222222"/><path d="M342.98 925.4L334.1 920.27" stroke="#222222"/><path d="M331.16 921.38L331.16 907.12" stroke="#222222"/><path d="M331.16 907.12L335.83 904.43" stroke="#222222"/><path d="M335.83 904.43L340.49 901.74" stroke="#3a44b8"/><path d="M331.76 906.08L327.1 903.38" stroke="#222222"/><path d="M327.1 903.38L322.43 900.69" stroke="#ff2a2a"/><path d="M330.55 908.17L325.89 905.48" stroke="#222222"/><path d="M325.89 905.48L321.22 902.78" stroke="#ff2a2a"/><path d="M343.5 928.5L343.5 933.37" stroke="#222222"/><path d="M343.5 933.37L343.5 938.24" stroke="#ff2a2a"/><path d="M355.84 907.12L368.18 900" stroke="#222222"/><path d="M368.18 900L372.85 902.69" stroke="#222222"/><path d="M372.85 902.69L377.52 905.39" stroke="#3a44b8"/><path d="M368.7 903.1L372.5 905.29" stroke="#222222"/><path d="M372.5 905.29L376.3 907.49" stroke="#3a44b8"/><path d="M380.52 910.6L380.52 915.99" stroke="#3a44b8"/><path d="M380.52 915.99L380.52 921.38" stroke="#222222"/><path d="M380.52 921.38L368.18 928.5" stroke="#222222"/><path d="M377.58 920.27L368.7 925.4" stroke="#222222"/><path d="M368.18 928.5L355.84 921.38" stroke="#222222"/><path d="M331.16 921.38L318.82 928.5" stroke="#222222"/><path d="M318.82 928.5L318.25 933.86" stroke="#222222"/><path d="M318.25 933.86L317.69 939.22" stroke="#3a44b8"/><path d="M316.2 930.23L315.74 934.6" stroke="#222222"/><path d="M315.74 934.6L315.28 938.97" stroke="#3a44b8"/><path d="M313.93 943.39L308.66 944.51" stroke="#3a44b8"/><path d="M308.66 944.51L303.39 945.63" stroke="#222222"/><path d="M303.39 945.63L296.27 933.29" stroke="#222222"/><path d="M300.29 945.12L295.16 936.23" stroke="#222222"/><path d="M296.27 933.29L299.52 929.68" stroke="#222222"/><path d="M299.52 929.68L302.78 926.06" stroke="#3a44b8"/><path d="M309.92 924.54L314.37 926.52" stroke="#3a44b8"/><path d="M314.37 926.52L318.82 928.5" stroke="#222222"/><path d="M303.39 945.63L296.27 957.98" stroke="#222222"/><path d="M296.27 957.98L282.02 957.98" stroke="#222222"/><path d="M294.27 955.55L284.01 955.55" stroke="#222222"/><path d="M282.02 957.98L274.89 945.63" stroke="#222222"/><path d="M274.89 945.63L282.02 933.29" stroke="#222222"/><path d="M277.99 945.12L283.12 936.23" stroke="#222222"/><path d="M282.02 933.29L296.27 933.29" stroke="#222222"/><path d="M282.02 957.98L276.63 967.31" stroke="#222222"/></g><g font-family="Liberation Sans,sans-serif" font-size="5.6" text-anchor="middle" stroke="none"><text x="343.5" y="902.02" fill="#3a44b8">N</text><text x="343.5" y="896.42" font-size="5.6" fill="#3a44b8">H</text><text x="380.52" y="909.14" fill="#3a44b8">N</text><text x="317.33" y="944.69" fill="#3a44b8">N</text><text x="305.8" y="924.72" fill="#3a44b8">NH</text><text x="318.82" y="902.02" fill="#ff2a2a">O</text><text x="343.5" y="944.77" fill="#ff2a2a">OH</text><text x="274.89" y="972.33" fill="#222222">C</text><text x="269.01" y="972.33" font-size="5.6" fill="#222222">H</text><text x="271.81" y="973.21" font-size="3.36" fill="#222222">3</text></g><g fill="none" stroke-width="1.15" stroke-linecap="round"><path d="M495.4 929.6L507.96 936.85" stroke="#222222"/><path d="M507.96 936.85L507.96 951.35" stroke="#222222"/><path d="M505.49 938.88L505.49 949.32" stroke="#222222"/><path d="M507.96 951.35L503.18 954.11" stroke="#222222"/><path d="M503.18 954.11L498.41 956.86" stroke="#3a44b8"/><path d="M492.39 956.86L487.62 954.11" stroke="#3a44b8"/><path d="M487.62 954.11L482.84 951.35" stroke="#222222"/><path d="M493.63 954.73L489.73 952.48" stroke="#3a44b8"/><path d="M489.73 952.48L485.83 950.23" stroke="#222222"/><path d="M482.84 951.35L482.84 936.85" stroke="#222222"/><path d="M482.84 936.85L495.4 929.6" stroke="#222222"/><path d="M485.83 937.97L494.87 932.75" stroke="#222222"/><path d="M495.4 929.6L495.4 915.1" stroke="#222222"/><path d="M496.02 914.03L491.24 911.28" stroke="#222222"/><path d="M491.24 911.28L486.47 908.52" stroke="#ff2a2a"/><path d="M494.78 916.17L490.01 913.41" stroke="#222222"/><path d="M490.01 913.41L485.23 910.65" stroke="#ff2a2a"/><path d="M495.4 915.1L500.18 912.34" stroke="#222222"/><path d="M500.18 912.34L504.95 909.59" stroke="#ff2a2a"/><path d="M482.84 936.85L478.07 934.09" stroke="#222222"/><path d="M478.07 934.09L473.29 931.34" stroke="#3a44b8"/><path d="M467.28 931.34L462.5 934.09" stroke="#3a44b8"/><path d="M462.5 934.09L457.73 936.85" stroke="#222222"/><path d="M456.5 936.85L456.5 942.36" stroke="#222222"/><path d="M456.5 942.36L456.5 947.88" stroke="#ff2a2a"/><path d="M458.96 936.85L458.96 942.36" stroke="#222222"/><path d="M458.96 942.36L458.96 947.88" stroke="#ff2a2a"/><path d="M457.73 936.85L445.17 929.6" stroke="#222222"/><path d="M445.17 929.6L432.61 936.85" stroke="#222222"/><path d="M431.38 936.85L431.38 942.36" stroke="#222222"/><path d="M431.38 942.36L431.38 947.88" stroke="#ff2a2a"/><path d="M433.85 936.85L433.85 942.36" stroke="#222222"/><path d="M433.85 942.36L433.85 947.88" stroke="#ff2a2a"/><path d="M432.61 936.85L427.84 934.09" stroke="#222222"/><path d="M427.84 934.09L423.06 931.34" stroke="#ff2a2a"/><path d="M417.05 931.34L413.78 933.23" stroke="#ff2a2a"/><path d="M413.78 933.23L410.51 935.11" stroke="#222222"/></g><g font-family="Liberation Sans,sans-serif" font-size="5.6" text-anchor="middle" stroke="none"><text x="495.4" y="960.62" fill="#3a44b8">N</text><text x="482.84" y="909.87" fill="#ff2a2a">O</text><text x="507.96" y="909.87" fill="#ff2a2a">O</text><text x="513.28" y="909.87" font-size="5.6" fill="#ff2a2a">H</text><text x="470.29" y="931.62" fill="#3a44b8">N</text><text x="470.29" y="926.02" font-size="5.6" fill="#3a44b8">H</text><text x="457.73" y="953.37" fill="#ff2a2a">O</text><text x="432.61" y="953.37" fill="#ff2a2a">O</text><text x="420.06" y="931.62" fill="#ff2a2a">O</text><text x="407.5" y="938.87" fill="#222222">C</text><text x="401.62" y="938.87" font-size="5.6" fill="#222222">H</text><text x="404.42" y="939.74" font-size="3.36" fill="#222222">3</text></g><g fill="none" stroke-width="1.15" stroke-linecap="round"><path d="M645.8 940.6L638.5 953.24" stroke="#222222"/><path d="M642.63 941.13L637.37 950.23" stroke="#222222"/><path d="M638.5 953.24L623.9 953.24" stroke="#222222"/><path d="M623.9 953.24L616.6 940.6" stroke="#222222"/><path d="M625.03 950.23L619.77 941.13" stroke="#222222"/><path d="M616.6 940.6L623.9 927.96" stroke="#222222"/><path d="M623.9 927.96L638.5 927.96" stroke="#222222"/><path d="M625.94 930.44L636.46 930.44" stroke="#222222"/><path d="M638.5 927.96L645.8 940.6" stroke="#222222"/><path d="M623.9 927.96L620.18 923.82" stroke="#222222"/><path d="M620.18 923.82L616.45 919.69" stroke="#3a44b8"/><path d="M610.96 918.52L605.88 920.78" stroke="#3a44b8"/><path d="M605.88 920.78L600.79 923.04" stroke="#222222"/><path d="M611.97 920.79L607.82 922.63" stroke="#3a44b8"/><path d="M607.82 922.63L603.67 924.48" stroke="#222222"/><path d="M600.79 923.04L601.37 928.58" stroke="#222222"/><path d="M601.37 928.58L601.96 934.11" stroke="#3a44b8"/><path d="M605.72 938.29L611.16 939.44" stroke="#3a44b8"/><path d="M611.16 939.44L616.6 940.6" stroke="#222222"/><path d="M600.79 923.04L588.15 915.74" stroke="#222222"/><path d="M588.15 915.74L575.5 923.04" stroke="#222222"/><path d="M574.26 923.04L574.26 928.61" stroke="#222222"/><path d="M574.26 928.61L574.26 934.17" stroke="#ff2a2a"/><path d="M576.75 923.04L576.75 928.61" stroke="#222222"/><path d="M576.75 928.61L576.75 934.17" stroke="#ff2a2a"/><path d="M575.5 923.04L570.69 920.26" stroke="#222222"/><path d="M570.69 920.26L565.87 917.48" stroke="#ff2a2a"/><path d="M559.85 917.48L555.04 920.26" stroke="#ff2a2a"/><path d="M555.04 920.26L550.22 923.04" stroke="#222222"/><path d="M550.22 923.04L540.58 917.48" stroke="#222222"/></g><g font-family="Liberation Sans,sans-serif" font-size="5.6" text-anchor="middle" stroke="none"><text x="602.32" y="939.58" fill="#3a44b8">N</text><text x="597" y="939.58" font-size="5.6" fill="#3a44b8">H</text><text x="614.13" y="919.12" fill="#3a44b8">N</text><text x="575.5" y="939.66" fill="#ff2a2a">O</text><text x="562.86" y="917.76" fill="#ff2a2a">O</text><text x="537.57" y="917.76" fill="#222222">C</text><text x="531.69" y="917.76" font-size="5.6" fill="#222222">H</text><text x="534.49" y="918.63" font-size="3.36" fill="#222222">3</text></g><g fill="none" stroke-width="1.7" stroke-linecap="round"><path d="M700.8 920.9L727.04 936.05" stroke="#222222"/><path d="M701.68 926.65L721.62 938.17" stroke="#222222"/><path d="M727.04 936.05L727.04 966.35" stroke="#222222"/><path d="M727.04 966.35L700.8 981.5" stroke="#222222"/><path d="M721.62 964.23L701.68 975.75" stroke="#222222"/><path d="M700.8 981.5L674.56 966.35" stroke="#222222"/><path d="M674.56 966.35L674.56 936.05" stroke="#222222"/><path d="M679.1 962.71L679.1 939.69" stroke="#222222"/><path d="M674.56 936.05L700.8 920.9" stroke="#222222"/><path d="M700.8 920.9L700.8 909.01" stroke="#222222"/><path d="M700.8 909.01L700.8 897.11" stroke="#222a8a"/><path d="M727.04 936.05L737.34 930.1" stroke="#222222"/><path d="M737.34 930.1L747.64 924.16" stroke="#222a8a"/></g><g font-family="Liberation Sans,sans-serif" font-size="10.5" text-anchor="middle" stroke="none"><text x="700.8" y="894.38" fill="#222a8a">N</text><text x="708.99" y="894.38" font-size="10.5" fill="#222a8a">H</text><text x="715.08" y="896.61" font-size="7.35" fill="#222a8a">2</text><text x="753.28" y="924.68" fill="#222a8a">N</text><text x="761.47" y="924.68" font-size="10.5" fill="#222a8a">H</text><text x="767.56" y="926.91" font-size="7.35" fill="#222a8a">2</text></g></svg>
<div class="t" style="left:293px;top:1000px;font-size:11px;letter-spacing:-0.009px;">Selected: 4</div>
<svg class="b" style="left:385px;top:1000px;" width="700" height="14" viewBox="0 0 700 14"><path d="M6.5 2.5 L3 6 L6.5 9.5 M674.5 2.5 L678 6 L674.5 9.5" fill="none" stroke="#444" stroke-width="2"/></svg>
<!-- p_right -->
<div class="b" style="left:1076px;top:80px;width:192px;height:20px;background:linear-gradient(#f6f6f6,#e4e4e4);border:1px solid #8e97a3;"></div>
<div class="b" style="left:1077px;top:81px;width:86px;height:19px;background:#fff;border-right:1px solid #8e97a3;"></div>
<div class="b" style="left:1078px;top:97px;width:84px;height:3px;background:#e0405a;"></div>
<div class="b" style="left:1165px;top:97px;width:101px;height:3px;background:#7b5ab0;"></div>
<svg class="b" style="left:1080px;top:82px;" width="16" height="16" viewBox="0 0 16 16"><circle cx="2.2" cy="2.2" r="1.5" fill="#3c3c3c"/><path d="M2.2 2.5 V11.6 H7.6 M2.2 6.4 H7.6" fill="none" stroke="#3c3c3c" stroke-width="1.2"/><text x="8.2" y="8.4" font-family="Liberation Serif,serif" font-size="7.5" fill="#3c3c3c">R</text><text x="8.2" y="13.9" font-family="Liberation Serif,serif" font-size="7.5" fill="#3c3c3c">R</text></svg>
<div class="t" style="left:1098px;top:84px;font-size:11px;letter-spacing:-0.365px;">Markush</div>
<svg class="b" style="left:1168px;top:83px;" width="16" height="16" viewBox="0 0 16 16"><path d="M2.6 10.6 L1 9.6 V3.6 L5.8 0.9 L8.2 2.2" fill="none" stroke="#3c3c3c" stroke-width="1.2" stroke-linejoin="round"/><path d="M8.6 2.9 L13.6 5.7 V11.3 L8.6 14.1 L3.7 11.3 V5.7 Z" fill="#fff" stroke="#3c3c3c" stroke-width="1.3" stroke-linejoin="round"/><path d="M10.6 7.2 Q8.6 5.8 7.2 7.4 Q6.3 8.6 7.2 9.8 Q8.6 11.3 10.6 9.9" fill="none" stroke="#3c3c3c" stroke-width="1.1"/></svg>
<div class="t" style="left:1186px;top:84px;font-size:11px;letter-spacing:-0.418px;">Compounds</div>
<svg class="b" style="left:1151px;top:85px;" width="9" height="9" viewBox="0 0 9 9"><path d="M0.7 0.7 L7.8 7.8 M7.8 0.7 L0.7 7.8" stroke="#222" stroke-width="1.1" fill="none"/></svg>
<svg class="b" style="left:1255px;top:85px;" width="9" height="9" viewBox="0 0 9 9"><path d="M0.7 0.7 L7.8 7.8 M7.8 0.7 L0.7 7.8" stroke="#222" stroke-width="1.1" fill="none"/></svg>
<svg class="b" style="left:1852px;top:82px;" width="64" height="12" viewBox="0 0 64 12"><path d="M6.5 0.5 V10.5 L0.8 5.5 Z" fill="#c4c4c4"/><path d="M18.5 0.5 V10.5 L24.2 5.5 Z" fill="#c4c4c4"/><path d="M33 2 H43.6 L38.3 7.6 Z" fill="#3c3c3c"/><rect x="51" y="1.3" width="9.4" height="7.4" fill="none" stroke="#3c3c3c" stroke-width="1.2"/><path d="M51 2 H60.4" stroke="#3c3c3c" stroke-width="1.8"/></svg>
<div class="b" style="left:1076px;top:99px;width:841px;height:740px;background:#f0f0f0;border:1px solid #8e97a3;border-bottom-color:#606060;"></div>
<div class="b" style="left:1078px;top:97px;width:84px;height:3px;background:#e0405a;"></div>
<div class="b" style="left:1165px;top:97px;width:101px;height:3px;background:#7b5ab0;"></div>
<div class="b" style="left:1077px;top:136px;width:839px;height:1px;background:#808080;"></div>
<div class="b" style="left:1077px;top:135px;width:839px;height:1px;background:#f8f8f8;"></div>
<div class="b" style="left:1229px;top:102px;width:32px;height:31px;background:#c5dcf2;border:1px solid #99c9ef;"></div>
<div class="b" style="left:1262px;top:102px;width:32px;height:31px;background:#c5dcf2;border:1px solid #99c9ef;"></div>
<div class="b" style="left:1149px;top:102px;width:1px;height:32px;background:#8c8c8c;"></div>
<div class="b" style="left:1223px;top:102px;width:1px;height:32px;background:#8c8c8c;"></div>
<div class="b" style="left:1298px;top:102px;width:1px;height:32px;background:#8c8c8c;"></div>
<div class="b" style="left:1408px;top:102px;width:1px;height:32px;background:#8c8c8c;"></div>
<div class="b" style="left:1448px;top:102px;width:1px;height:32px;background:#8c8c8c;"></div>
<svg class="b" style="left:0px;top:0px;" width="1500" height="140" viewBox="0 0 1500 140"><circle cx="1094.5" cy="115.5" r="6.6" fill="#fff" stroke="#3c3c3c" stroke-width="1.1"/><path d="M1099.5 120.7 L1104.1 125.5" stroke="#3c3c3c" stroke-width="2.4" stroke-linecap="round"/><path d="M1090.5 115.5 H1098.5" stroke="#0a5bd0" stroke-width="1.9"/><path d="M1094.5 111.5 V119.5" stroke="#0a5bd0" stroke-width="1.9"/><circle cx="1127" cy="115.5" r="6.6" fill="#fff" stroke="#3c3c3c" stroke-width="1.1"/><path d="M1132 120.7 L1136.6 125.5" stroke="#3c3c3c" stroke-width="2.4" stroke-linecap="round"/><path d="M1123 115.5 H1131" stroke="#0a5bd0" stroke-width="1.9"/><rect x="1161" y="108" width="5" height="5" fill="#4a4a4a"/><path d="M1167 110.5 H1180" stroke="#4a4a4a" stroke-width="1" stroke-dasharray="1 1"/><rect x="1161" y="116" width="5" height="5" fill="#4a4a4a"/><path d="M1167 118.5 H1176" stroke="#4a4a4a" stroke-width="1" stroke-dasharray="1 1"/><rect x="1161" y="123" width="5" height="5" fill="#4a4a4a"/><path d="M1167 125.5 H1172" stroke="#4a4a4a" stroke-width="1" stroke-dasharray="1 1"/><path d="M1170.5 120.5 H1182.5 L1176.5 128.6 Z" fill="#0a63d0"/><rect x="1193" y="108" width="5" height="5" fill="#4a4a4a"/><path d="M1199 110.5 H1212" stroke="#4a4a4a" stroke-width="1" stroke-dasharray="1 1"/><rect x="1193" y="116" width="5" height="5" fill="#4a4a4a"/><path d="M1199 118.5 H1208" stroke="#4a4a4a" stroke-width="1" stroke-dasharray="1 1"/><rect x="1193" y="123" width="5" height="5" fill="#4a4a4a"/><path d="M1199 125.5 H1204" stroke="#4a4a4a" stroke-width="1" stroke-dasharray="1 1"/><path d="M1202.5 128.6 H1214.5 L1208.5 120.5 Z" fill="#0a63d0"/><path d="M1236.5 107 V129" stroke="#3c3c3c" stroke-width="1" stroke-dasharray="2 1.4"/><path d="M1236 108.7 H1247.2 V111.5" fill="none" stroke="#3c3c3c" stroke-width="1"/><rect x="1242.2" y="114.3" width="10.6" height="10.6" fill="none" stroke="#3c3c3c" stroke-width="1.9"/><path d="M1242 117 H1253" stroke="#3c3c3c" stroke-width="1.2"/><text x="1270.6" y="114.8" font-family="Liberation Sans,sans-serif" font-size="7.4" fill="#3c3c3c">R</text><path d="M1267.2 125.4 L1272 122.6 V117.6 M1272 122.6 L1278 126 L1284 122.6 V113.6 L1278.8 111.2 M1284 113.6 L1288.6 112.2" fill="none" stroke="#3c3c3c" stroke-width="1.6" stroke-linejoin="round"/><text x="1420" y="124.6" font-family="Liberation Serif,serif" font-size="17" fill="#3c3c3c">R</text><path d="M1437.5 109 V127 M1437.5 110 H1434 M1437.5 118 H1434 M1437.5 126 H1434" stroke="#0a63d0" stroke-width="1.3" fill="none"/><path d="M1437.5 113.6 H1441 M1437.5 122.2 H1441" stroke="#0a63d0" stroke-width="1.3"/><path d="M1470 110.4 H1460.4 Q1458.4 110.4 1458.4 112.4 V122.6 L1461.4 125.6 H1471 Q1473 125.6 1473 123.6 V117" fill="none" stroke="#3c3c3c" stroke-width="1.8" stroke-linejoin="round"/><path d="M1462 111 V115 H1467 M1463.4 125 V120.4 H1469.8 V125" fill="none" stroke="#3c3c3c" stroke-width="1.2"/><path d="M1469.4 114.6 L1476.6 107.4" stroke="#3c3c3c" stroke-width="2.4" stroke-linecap="round"/><path d="M1467.6 116.6 L1468.6 114 L1470 115.6 Z" fill="#3c3c3c"/></svg>
<div class="b" style="left:1304px;top:107px;width:100px;height:22px;background:#fff;border:1px solid #9aa3b0;"></div>
<div class="t" style="left:1307px;top:112px;font-size:11px;letter-spacing:-0.083px;">Scaffold</div>
<svg class="b" style="left:1388px;top:113px;" width="12" height="10" viewBox="0 0 12 10"><path d="M1.5 3 L5.7 7.2 L10 3" fill="none" stroke="#444" stroke-width="1.1"/></svg>
<div class="b" style="left:1077px;top:137px;width:839px;height:701px;background:#fff;"></div>
<div class="b" style="left:1445px;top:137px;width:16px;height:698px;background:#f0f0f0;"></div>
<div class="b" style="left:1445px;top:154px;width:15px;height:108px;background:#cdcdcd;"></div>
<svg class="b" style="left:1445px;top:137px;" width="16" height="698" viewBox="0 0 16 698"><path d="M4 10 L8 6 L12 10 M4 687.5 L8 691.5 L12 687.5" fill="none" stroke="#505050" stroke-width="2"/></svg>
<svg class="b" style="left:0px;top:0px;" width="1462" height="836" viewBox="0 0 1462 836"><path d="M1103 203.5 H1116" stroke="#777" stroke-width="1" stroke-dasharray="1 1" fill="none"/><path d="M1157.5 265 V836" stroke="#777" stroke-width="1" stroke-dasharray="1 1" fill="none"/><path d="M1158 325.5 H1178" stroke="#777" stroke-width="1" stroke-dasharray="1 1" fill="none"/><path d="M1158 447.5 H1178" stroke="#777" stroke-width="1" stroke-dasharray="1 1" fill="none"/><path d="M1162 569.5 H1178" stroke="#777" stroke-width="1" stroke-dasharray="1 1" fill="none"/><path d="M1158 813.5 H1178" stroke="#777" stroke-width="1" stroke-dasharray="1 1" fill="none"/><path d="M1217.5 629 V691" stroke="#777" stroke-width="1" stroke-dasharray="1 1" fill="none"/><path d="M1218 691.5 H1238" stroke="#777" stroke-width="1" stroke-dasharray="1 1" fill="none"/></svg><svg class="b" style="left:1093px;top:199px;" width="9" height="9" viewBox="0 0 9 9"><rect x="0.5" y="0.5" width="8" height="8" rx="1" fill="#fafafa" stroke="#919191" stroke-width="1"/><path d="M2 4.5 H7" stroke="#3a46a8" stroke-width="1.1"/></svg><svg class="b" style="left:1153px;top:565px;" width="9" height="9" viewBox="0 0 9 9"><rect x="0.5" y="0.5" width="8" height="8" rx="1" fill="#fafafa" stroke="#919191" stroke-width="1"/><path d="M2 4.5 H7" stroke="#3a46a8" stroke-width="1.1"/></svg><svg class="b" style="left:0px;top:0px;" width="1300" height="270" viewBox="0 0 1300 270"><path d="M1118.5 167 V144.5 H1141 M1215 144.5 H1237.5 V167 M1118.5 239 V261.5 H1141 M1215 261.5 H1237.5 V239" fill="none" stroke="#0000ff" stroke-width="3"/></svg><div class="b" style="left:1119px;top:145px;width:118px;height:116px;background:#fff;border:1px solid #3c3c3c;"></div><div class="b" style="left:1120px;top:146px;width:116px;height:16px;background:#ccffcc;"></div><div class="b" style="left:1120px;top:162px;width:116px;height:1px;background:#3c3c3c;"></div><div class="t" style="left:1123px;top:148px;font-size:11px;letter-spacing:-0.083px;">Scaffold</div><svg class="b" style="left:0px;top:0px;" width="1300" height="270" viewBox="0 0 1300 270"><g fill="none" stroke-width="1.0" stroke-linecap="round"><path d="M1157.6 214L1168.17 220.1" stroke="#189e18"/><path d="M1158.1 216.54L1165.71 220.94" stroke="#189e18"/><path d="M1168.17 220.1L1168.17 232.3" stroke="#189e18"/><path d="M1168.17 232.3L1160.15 236.93" stroke="#189e18"/><path d="M1155.05 236.93L1147.03 232.3" stroke="#189e18"/><path d="M1147.03 232.3L1147.03 220.1" stroke="#189e18"/><path d="M1148.99 230.59L1148.99 221.81" stroke="#189e18"/><path d="M1147.03 220.1L1157.6 214" stroke="#189e18"/><path d="M1157.6 214L1157.6 204.74" stroke="#189e18"/><path d="M1167.68 233.15L1175.7 237.78" stroke="#189e18"/><path d="M1168.65 231.45L1176.67 236.08" stroke="#189e18"/><path d="M1157.6 241.34L1157.6 246.78" stroke="#189e18"/><path d="M1168.17 220.1L1178.73 214" stroke="#189e18"/><path d="M1178.73 214L1178.57 204.74" stroke="#189e18"/><path d="M1180.65 212.26L1180.52 204.71" stroke="#189e18"/><path d="M1181.3 200.84L1190.05 197.83" stroke="#189e18"/><path d="M1190.05 197.83L1197.4 207.57" stroke="#189e18"/><path d="M1192.64 198.02L1197.93 205.03" stroke="#189e18"/><path d="M1197.4 207.57L1192.08 215.16" stroke="#189e18"/><path d="M1187.59 216.71L1178.73 214" stroke="#189e18"/><path d="M1190.05 197.83L1194.82 186.6" stroke="#189e18"/><path d="M1194.82 186.6L1206.93 185.11" stroke="#189e18"/><path d="M1196.75 188.33L1205.47 187.26" stroke="#189e18"/><path d="M1206.93 185.11L1214.27 194.86" stroke="#189e18"/><path d="M1214.27 194.86L1209.5 206.09" stroke="#189e18"/><path d="M1211.81 195.67L1208.38 203.75" stroke="#189e18"/><path d="M1209.5 206.09L1197.4 207.57" stroke="#189e18"/><path d="M1194.82 186.6L1189.78 179.91" stroke="#189e18"/><path d="M1206.93 185.11L1210.2 177.4" stroke="#189e18"/><path d="M1214.27 194.86L1222.59 193.84" stroke="#189e18"/><path d="M1209.5 206.09L1214.55 212.78" stroke="#189e18"/></g><g font-family="Liberation Sans,sans-serif" font-size="4.2" text-anchor="middle" stroke="none"><text x="1157.6" y="240.21" fill="#189e18">N</text><text x="1178.52" y="203.61" fill="#189e18">N</text><text x="1190.4" y="219.38" fill="#189e18">Z</text><text x="1157.6" y="203.61" fill="#189e18">Y</text><text x="1178.73" y="240.21" fill="#189e18">O</text><text x="1157.6" y="252.41" fill="#189e18">R3</text><text x="1187.48" y="178.67" fill="#189e18">R4</text><text x="1211.7" y="175.69" fill="#189e18">R5</text><text x="1226.38" y="195.18" fill="#189e18">R6</text><text x="1216.85" y="217.64" fill="#189e18">R7</text></g><circle cx="1142.64" cy="223.76" r="2.07" fill="#ffe9e9" stroke="#ff8a8a" stroke-width="0.9"/><circle cx="1142.64" cy="230.59" r="2.07" fill="#ffe9e9" stroke="#ff8a8a" stroke-width="0.9"/><circle cx="1182.93" cy="215.28" r="2.07" fill="#ffe9e9" stroke="#ff8a8a" stroke-width="0.9"/><circle cx="1194.46" cy="211.77" r="2.07" fill="#ffe9e9" stroke="#ff8a8a" stroke-width="0.9"/><text x="1139.47" y="229.18" font-size="4.2" text-anchor="end" fill="#189e18" font-family="Liberation Sans,sans-serif">R1+R2</text><path d="M1147.03 220.1 L1144.59 221.56 M1147.03 232.3 L1144.59 230.84" stroke="#189e18" stroke-width="1.0" fill="none"/></svg><div class="b" style="left:1179px;top:267px;width:118px;height:116px;background:#fff;border:1px solid #3c3c3c;"></div><div class="b" style="left:1180px;top:268px;width:116px;height:16px;background:#ccffcc;"></div><div class="b" style="left:1180px;top:284px;width:116px;height:1px;background:#3c3c3c;"></div><div class="t" style="left:1183px;top:270px;font-size:11px;letter-spacing:-0.220px;">R1+R2 (R1)</div><div class="t" style="left:1245px;top:270px;font-size:11px;color:#808080;">[12]</div><svg class="b" style="left:0px;top:0px;" width="1300" height="400" viewBox="0 0 1300 400"><path d="M1198.74 300.4 L1192.5 296.8 L1186.26 300.4 L1186.26 307.6 L1192.5 311.2 L1198.74 307.6" fill="none" stroke="#189e18" stroke-width="1" stroke-linejoin="round"/><path d="M1191.9 298.5 L1187.66 301" stroke="#189e18" stroke-width="0.9"/><path d="M1187.66 307 L1191.9 309.5" stroke="#189e18" stroke-width="0.9"/><path d="M1199.94 298.4 L1197.54 302.4 M1197.54 305.6 L1199.94 309.6" stroke="#189e18" stroke-width="1"/><circle cx="1197.74" cy="308.8" r="1.3" fill="#b8c6dc"/><path d="M1228.24 300.4 L1222 296.8 L1215.76 300.4 L1215.76 307.6 L1222 311.2 L1228.24 307.6" fill="none" stroke="#222" stroke-width="1" stroke-linejoin="round"/><path d="M1221.4 298.5 L1217.16 301" stroke="#222" stroke-width="0.9"/><path d="M1229.44 298.4 L1227.04 302.4 M1227.04 305.6 L1229.44 309.6" stroke="#222" stroke-width="1"/><circle cx="1227.24" cy="308.8" r="1.3" fill="#b8c6dc"/><path d="M1257.24 300.4 L1251 296.8 L1244.76 300.4 L1244.76 307.6 L1251 311.2 L1257.24 307.6" fill="none" stroke="#222" stroke-width="1" stroke-linejoin="round"/><path d="M1250.4 298.5 L1246.16 301" stroke="#222" stroke-width="0.9"/><path d="M1246.16 307 L1250.4 309.5" stroke="#222" stroke-width="0.9"/><path d="M1258.44 298.4 L1256.04 302.4 M1256.04 305.6 L1258.44 309.6" stroke="#222" stroke-width="1"/><circle cx="1256.24" cy="308.8" r="1.3" fill="#b8c6dc"/><path d="M1290.24 300.4 L1284 296.8 L1277.76 300.4 L1277.76 307.6 L1284 311.2 L1290.24 307.6" fill="none" stroke="#222" stroke-width="1" stroke-linejoin="round"/><path d="M1283.4 298.5 L1279.16 301" stroke="#222" stroke-width="0.9"/><path d="M1291.44 298.4 L1289.04 302.4 M1289.04 305.6 L1291.44 309.6" stroke="#222" stroke-width="1"/><circle cx="1289.24" cy="308.8" r="1.3" fill="#b8c6dc"/><path d="M1198.74 329.4 L1192.5 325.8 L1186.26 329.4 L1186.26 336.6 L1192.5 340.2 L1198.74 336.6" fill="none" stroke="#222" stroke-width="1" stroke-linejoin="round"/><path d="M1191.9 327.5 L1187.66 330" stroke="#222" stroke-width="0.9"/><path d="M1187.66 336 L1191.9 338.5" stroke="#222" stroke-width="0.9"/><path d="M1199.94 327.4 L1197.54 331.4 M1197.54 334.6 L1199.94 338.6" stroke="#222" stroke-width="1"/><circle cx="1197.74" cy="337.8" r="1.3" fill="#b8c6dc"/><path d="M1228.24 329.4 L1222 325.8 L1215.76 329.4 L1215.76 336.6 L1222 340.2 L1228.24 336.6" fill="none" stroke="#222" stroke-width="1" stroke-linejoin="round"/><path d="M1221.4 327.5 L1217.16 330" stroke="#222" stroke-width="0.9"/><path d="M1229.44 327.4 L1227.04 331.4 M1227.04 334.6 L1229.44 338.6" stroke="#222" stroke-width="1"/><circle cx="1227.24" cy="337.8" r="1.3" fill="#b8c6dc"/><path d="M1257.24 329.4 L1251 325.8 L1244.76 329.4 L1244.76 336.6 L1251 340.2 L1257.24 336.6" fill="none" stroke="#222" stroke-width="1" stroke-linejoin="round"/><path d="M1250.4 327.5 L1246.16 330" stroke="#222" stroke-width="0.9"/><path d="M1246.16 336 L1250.4 338.5" stroke="#222" stroke-width="0.9"/><path d="M1258.44 327.4 L1256.04 331.4 M1256.04 334.6 L1258.44 338.6" stroke="#222" stroke-width="1"/><circle cx="1256.24" cy="337.8" r="1.3" fill="#b8c6dc"/><path d="M1286.24 329.4 L1280 325.8 L1273.76 329.4 L1273.76 336.6 L1280 340.2 L1286.24 336.6" fill="none" stroke="#222" stroke-width="1" stroke-linejoin="round"/><path d="M1279.4 327.5 L1275.16 330" stroke="#222" stroke-width="0.9"/><path d="M1287.44 327.4 L1285.04 331.4 M1285.04 334.6 L1287.44 338.6" stroke="#222" stroke-width="1"/><circle cx="1285.24" cy="337.8" r="1.3" fill="#b8c6dc"/><path d="M1198.74 358.4 L1192.5 354.8 L1186.26 358.4 L1186.26 365.6 L1192.5 369.2 L1198.74 365.6" fill="none" stroke="#222" stroke-width="1" stroke-linejoin="round"/><path d="M1191.9 356.5 L1187.66 359" stroke="#222" stroke-width="0.9"/><path d="M1187.66 365 L1191.9 367.5" stroke="#222" stroke-width="0.9"/><path d="M1199.94 356.4 L1197.54 360.4 M1197.54 363.6 L1199.94 367.6" stroke="#222" stroke-width="1"/><circle cx="1197.74" cy="366.8" r="1.3" fill="#b8c6dc"/><path d="M1228.24 358.4 L1222 354.8 L1215.76 358.4 L1215.76 365.6 L1222 369.2 L1228.24 365.6" fill="none" stroke="#222" stroke-width="1" stroke-linejoin="round"/><path d="M1221.4 356.5 L1217.16 359" stroke="#222" stroke-width="0.9"/><path d="M1229.44 356.4 L1227.04 360.4 M1227.04 363.6 L1229.44 367.6" stroke="#222" stroke-width="1"/><circle cx="1227.24" cy="366.8" r="1.3" fill="#b8c6dc"/><path d="M1257.24 358.4 L1251 354.8 L1244.76 358.4 L1244.76 365.6 L1251 369.2 L1257.24 365.6" fill="none" stroke="#222" stroke-width="1" stroke-linejoin="round"/><path d="M1250.4 356.5 L1246.16 359" stroke="#222" stroke-width="0.9"/><path d="M1246.16 365 L1250.4 367.5" stroke="#222" stroke-width="0.9"/><path d="M1258.44 356.4 L1256.04 360.4 M1256.04 363.6 L1258.44 367.6" stroke="#222" stroke-width="1"/><circle cx="1256.24" cy="366.8" r="1.3" fill="#b8c6dc"/><path d="M1290.24 358.4 L1284 354.8 L1277.76 358.4 L1277.76 365.6 L1284 369.2 L1290.24 365.6" fill="none" stroke="#222" stroke-width="1" stroke-linejoin="round"/><path d="M1283.4 356.5 L1279.16 359" stroke="#222" stroke-width="0.9"/><path d="M1291.44 356.4 L1289.04 360.4 M1289.04 363.6 L1291.44 367.6" stroke="#222" stroke-width="1"/><circle cx="1289.24" cy="366.8" r="1.3" fill="#b8c6dc"/></svg><div class="b" style="left:1179px;top:389px;width:118px;height:116px;background:#fff;border:1px solid #3c3c3c;"></div><div class="b" style="left:1180px;top:390px;width:116px;height:16px;background:#ffcccc;"></div><div class="b" style="left:1180px;top:406px;width:116px;height:1px;background:#3c3c3c;"></div><div class="t" style="left:1183px;top:392px;font-size:11px;letter-spacing:-1.344px;">Y</div><div class="t" style="left:1194px;top:392px;font-size:11px;color:#808080;">[1]</div><svg class="b" style="left:0px;top:0px;" width="1300" height="520" viewBox="0 0 1300 520"><path d="M1202.5 439 Q1200.3 441.42 1202.5 443.83 Q1204.7 446.25 1202.5 448.67 Q1200.3 451.08 1202.5 453.5 Q1204.7 455.92 1202.5 458.33 Q1200.3 460.75 1202.5 463.17 Q1204.7 465.58 1202.5 468" fill="none" stroke="#111" stroke-width="1.6" stroke-linecap="round"/><path d="M1203 453.5 H1241" stroke="#111" stroke-width="1.7"/><text x="1244.5" y="461" font-family="Liberation Sans,sans-serif" font-size="15" fill="#111">NH</text><text x="1266" y="465" font-family="Liberation Sans,sans-serif" font-size="10" fill="#111">2</text></svg><div class="b" style="left:1179px;top:511px;width:118px;height:116px;background:#fff;border:1px solid #3c3c3c;"></div><div class="b" style="left:1180px;top:512px;width:116px;height:16px;background:#ccffcc;"></div><div class="b" style="left:1180px;top:528px;width:116px;height:1px;background:#3c3c3c;"></div><div class="t" style="left:1183px;top:514px;font-size:11px;letter-spacing:-0.719px;">Z</div><div class="t" style="left:1194px;top:514px;font-size:11px;color:#808080;">[1]</div><svg class="b" style="left:0px;top:0px;" width="1300" height="640" viewBox="0 0 1300 640"><g fill="none" stroke="#189e18" stroke-width="1.7"><path d="M1229 578 H1245 M1258.5 567.5 L1270 546.5 M1258.5 586 L1270 606.5"/></g><path d="M1262.94 540.77 Q1263.6 543.29 1265.96 542.18 Q1268.31 541.07 1268.98 543.59 Q1269.64 546.11 1272 545 Q1274.36 543.89 1275.02 546.41 Q1275.69 548.93 1278.04 547.82 Q1280.4 546.71 1281.06 549.23" fill="none" stroke="#189e18" stroke-width="1.3" stroke-linecap="round"/><path d="M1263.17 611.69 Q1265.58 612.68 1266.11 610.13 Q1266.65 607.58 1269.06 608.56 Q1271.47 609.55 1272 607 Q1272.53 604.45 1274.94 605.44 Q1277.35 606.42 1277.89 603.87 Q1278.42 601.32 1280.83 602.31" fill="none" stroke="#189e18" stroke-width="1.3" stroke-linecap="round"/><g font-family="Liberation Sans,sans-serif" font-size="13" fill="#189e18"><text x="1202" y="583">R13</text><text x="1248.5" y="583">N</text></g><circle cx="1261.5" cy="605.5" r="4.6" fill="#c8d8ee" stroke="#b8c4d8" stroke-width="0.6"/><text x="1261.5" y="608.6" font-family="Liberation Sans,sans-serif" font-size="8.5" text-anchor="middle" fill="#111">2</text></svg><div class="b" style="left:1239px;top:633px;width:118px;height:116px;background:#fff;border:1px solid #3c3c3c;"></div><div class="b" style="left:1240px;top:634px;width:116px;height:16px;background:#ccffcc;"></div><div class="b" style="left:1240px;top:650px;width:116px;height:1px;background:#3c3c3c;"></div><div class="t" style="left:1243px;top:636px;font-size:11px;letter-spacing:-0.594px;">R13</div><div class="t" style="left:1267px;top:636px;font-size:11px;color:#808080;">[15]</div><svg class="b" style="left:0px;top:0px;" width="1400" height="760" viewBox="0 0 1400 760"><path d="M1249 661 H1254 M1251 659 L1249 661 L1251 663" stroke="#189e18" stroke-width="0.9" fill="none"/><path d="M1255 660.5 H1259" stroke="#189e18" stroke-width="0.8" stroke-dasharray="2 1"/><path d="M1272 661 H1277 M1274 659 L1272 661 L1274 663" stroke="#333" stroke-width="0.9" fill="none"/><path d="M1278 660.5 H1282" stroke="#999" stroke-width="0.8" stroke-dasharray="2 1"/><path d="M1294 658 H1304" stroke="#999" stroke-width="0.8" stroke-dasharray="3 1.5"/><path d="M1304 658 L1309 663 M1306.6 663.6 L1309 663 L1308.6 660.4" stroke="#333" stroke-width="0.9" fill="none"/><path d="M1323 658 H1333" stroke="#999" stroke-width="0.8" stroke-dasharray="3 1.5"/><path d="M1333 658 L1338 663 M1335.6 663.6 L1338 663 L1337.6 660.4" stroke="#333" stroke-width="0.9" fill="none"/><path d="M1250 682.5 H1255 M1252 680.5 L1250 682.5 L1252 684.5" stroke="#333" stroke-width="0.9" fill="none"/><path d="M1256 682.0 H1260" stroke="#999" stroke-width="0.8" stroke-dasharray="2 1"/><path d="M1272 679.5 H1282" stroke="#999" stroke-width="0.8" stroke-dasharray="3 1.5"/><path d="M1282 679.5 L1287 684.5 M1284.6 685.1 L1287 684.5 L1286.6 681.9" stroke="#333" stroke-width="0.9" fill="none"/><path d="M1301 679.5 H1311" stroke="#999" stroke-width="0.8" stroke-dasharray="3 1.5"/><path d="M1311 679.5 L1316 684.5 M1313.6 685.1 L1316 684.5 L1315.6 681.9" stroke="#333" stroke-width="0.9" fill="none"/><path d="M1330 678.5 L1335 679.5 M1345 679.5 L1350 678.5" stroke="#999" stroke-width="0.8"/><path d="M1336 679.5 L1340 682.0 L1344 679.5" stroke="#999" stroke-width="0.8" fill="none"/><path d="M1340 682.0 V688.5 M1338 686.5 L1340 688.5 L1342 686.5" stroke="#333" stroke-width="0.9" fill="none"/><path d="M1243 703 L1248 704 M1258 704 L1263 703" stroke="#999" stroke-width="0.8"/><path d="M1249 704 L1253 706.5 L1257 704" stroke="#999" stroke-width="0.8" fill="none"/><path d="M1253 706.5 V713 M1251 711 L1253 713 L1255 711" stroke="#333" stroke-width="0.9" fill="none"/><path d="M1275 703 L1280 704 M1290 704 L1295 703" stroke="#999" stroke-width="0.8"/><path d="M1281 704 L1285 706.5 L1289 704" stroke="#999" stroke-width="0.8" fill="none"/><path d="M1285 706.5 V713 M1283 711 L1285 713 L1287 711" stroke="#333" stroke-width="0.9" fill="none"/><path d="M1305 707 H1309" stroke="#999" stroke-width="0.8" stroke-dasharray="2 1"/><path d="M1310 707 H1316 M1314 705 L1316 707 L1314 709" stroke="#333" stroke-width="0.9" fill="none"/><path d="M1330 707 H1334" stroke="#999" stroke-width="0.8" stroke-dasharray="2 1"/><path d="M1335 707 H1341 M1339 705 L1341 707 L1339 709" stroke="#333" stroke-width="0.9" fill="none"/><path d="M1247 732 L1251 736 L1258 734 M1247 735 L1247 732 L1249.5 731.6" stroke="#333" stroke-width="1" fill="none"/><path d="M1275 733.2 H1281 M1275 734.8 H1281 M1281 734 L1285 728 M1282.6 728.4 L1285 728 L1285.2 730.6 M1281 734 L1284 739" stroke="#333" stroke-width="1" fill="none"/><path d="M1285 740 H1290" stroke="#999" stroke-width="0.8"/><path d="M1304 733.2 H1310 M1304 734.8 H1310 M1310 734 L1314 728 M1311.6 728.4 L1314 728 L1314.2 730.6 M1310 734 L1313 739" stroke="#333" stroke-width="1" fill="none"/><path d="M1314 740 H1323" stroke="#999" stroke-width="0.8"/></svg><div class="b" style="left:1077px;top:755px;width:368px;height:81px;overflow:hidden"><div class="b" style="left:102px;top:0px;width:118px;height:116px;background:#fff;border:1px solid #3c3c3c;"></div><div class="b" style="left:103px;top:1px;width:116px;height:16px;background:#ccffcc;"></div><div class="b" style="left:103px;top:17px;width:116px;height:1px;background:#3c3c3c;"></div><div class="t" style="left:106px;top:3px;font-size:11px;letter-spacing:-1.062px;">R3</div><div class="t" style="left:124px;top:3px;font-size:11px;color:#808080;">[15]</div><svg class="b" style="left:0px;top:0px;" width="300" height="100" viewBox="0 0 300 100"><path d="M112 28 H117 M114 26 L112 28 L114 30" stroke="#189e18" stroke-width="0.9" fill="none"/><path d="M118 27.5 H122" stroke="#189e18" stroke-width="0.8" stroke-dasharray="2 1"/><path d="M135 28 H140 M137 26 L135 28 L137 30" stroke="#333" stroke-width="0.9" fill="none"/><path d="M141 27.5 H145" stroke="#999" stroke-width="0.8" stroke-dasharray="2 1"/><path d="M157 25 H167" stroke="#999" stroke-width="0.8" stroke-dasharray="3 1.5"/><path d="M167 25 L172 30 M169.6 30.6 L172 30 L171.6 27.4" stroke="#333" stroke-width="0.9" fill="none"/><path d="M186 25 H196" stroke="#999" stroke-width="0.8" stroke-dasharray="3 1.5"/><path d="M196 25 L201 30 M198.6 30.6 L201 30 L200.6 27.4" stroke="#333" stroke-width="0.9" fill="none"/><path d="M113 49.5 H118 M115 47.5 L113 49.5 L115 51.5" stroke="#333" stroke-width="0.9" fill="none"/><path d="M119 49.0 H123" stroke="#999" stroke-width="0.8" stroke-dasharray="2 1"/><path d="M135 46.5 H145" stroke="#999" stroke-width="0.8" stroke-dasharray="3 1.5"/><path d="M145 46.5 L150 51.5 M147.6 52.1 L150 51.5 L149.6 48.9" stroke="#333" stroke-width="0.9" fill="none"/><path d="M164 46.5 H174" stroke="#999" stroke-width="0.8" stroke-dasharray="3 1.5"/><path d="M174 46.5 L179 51.5 M176.6 52.1 L179 51.5 L178.6 48.9" stroke="#333" stroke-width="0.9" fill="none"/><path d="M193 45.5 L198 46.5 M208 46.5 L213 45.5" stroke="#999" stroke-width="0.8"/><path d="M199 46.5 L203 49.0 L207 46.5" stroke="#999" stroke-width="0.8" fill="none"/><path d="M203 49.0 V55.5 M201 53.5 L203 55.5 L205 53.5" stroke="#333" stroke-width="0.9" fill="none"/><path d="M106 70 L111 71 M121 71 L126 70" stroke="#999" stroke-width="0.8"/><path d="M112 71 L116 73.5 L120 71" stroke="#999" stroke-width="0.8" fill="none"/><path d="M116 73.5 V80 M114 78 L116 80 L118 78" stroke="#333" stroke-width="0.9" fill="none"/><path d="M138 70 L143 71 M153 71 L158 70" stroke="#999" stroke-width="0.8"/><path d="M144 71 L148 73.5 L152 71" stroke="#999" stroke-width="0.8" fill="none"/><path d="M148 73.5 V80 M146 78 L148 80 L150 78" stroke="#333" stroke-width="0.9" fill="none"/><path d="M168 74 H172" stroke="#999" stroke-width="0.8" stroke-dasharray="2 1"/><path d="M173 74 H179 M177 72 L179 74 L177 76" stroke="#333" stroke-width="0.9" fill="none"/><path d="M193 74 H197" stroke="#999" stroke-width="0.8" stroke-dasharray="2 1"/><path d="M198 74 H204 M202 72 L204 74 L202 76" stroke="#333" stroke-width="0.9" fill="none"/></svg></div>
<!-- p_right2 -->
<div class="b" style="left:1464px;top:137px;width:1px;height:698px;background:#6a6a6a;"></div>
<svg class="b" style="left:0px;top:0px;" width="1920" height="360" viewBox="0 0 1920 360"><g fill="none" stroke-width="1.6" stroke-linecap="round"><path d="M1646.9 240.6L1670.02 253.95" stroke="#189e18"/><path d="M1648 246.17L1664.65 255.78" stroke="#189e18"/><path d="M1670.02 253.95L1670.02 280.65" stroke="#189e18"/><path d="M1670.02 280.65L1652.81 290.59" stroke="#189e18"/><path d="M1640.99 290.59L1623.78 280.65" stroke="#189e18"/><path d="M1623.78 280.65L1623.78 253.95" stroke="#189e18"/><path d="M1628.05 276.91L1628.05 257.69" stroke="#189e18"/><path d="M1623.78 253.95L1646.9 240.6" stroke="#189e18"/><path d="M1646.9 240.6L1646.9 220.72" stroke="#189e18"/><path d="M1668.95 282.5L1686.17 292.44" stroke="#189e18"/><path d="M1671.09 278.8L1688.3 288.74" stroke="#189e18"/><path d="M1646.9 300.82L1646.9 311.83" stroke="#189e18"/><path d="M1670.02 253.95L1693.15 240.6" stroke="#189e18"/><path d="M1693.15 240.6L1692.8 220.73" stroke="#189e18"/><path d="M1697.35 236.79L1697.07 220.65" stroke="#189e18"/><path d="M1699.13 211.68L1717.93 205.21" stroke="#189e18"/><path d="M1717.93 205.21L1733.99 226.53" stroke="#189e18"/><path d="M1723.59 205.63L1735.16 220.98" stroke="#189e18"/><path d="M1733.99 226.53L1722.59 242.82" stroke="#189e18"/><path d="M1712.15 246.41L1693.15 240.6" stroke="#189e18"/><path d="M1717.93 205.21L1728.36 180.63" stroke="#189e18"/><path d="M1728.36 180.63L1754.86 177.38" stroke="#189e18"/><path d="M1732.59 184.42L1751.67 182.08" stroke="#189e18"/><path d="M1754.86 177.38L1770.93 198.7" stroke="#189e18"/><path d="M1770.93 198.7L1760.49 223.28" stroke="#189e18"/><path d="M1765.53 200.48L1758.02 218.17" stroke="#189e18"/><path d="M1760.49 223.28L1733.99 226.53" stroke="#189e18"/><path d="M1728.36 180.63L1717.63 166.4" stroke="#189e18"/><path d="M1754.86 177.38L1761.82 160.97" stroke="#189e18"/><path d="M1770.93 198.7L1788.62 196.53" stroke="#189e18"/><path d="M1760.49 223.28L1771.22 237.52" stroke="#189e18"/></g><g font-family="Liberation Sans,sans-serif" font-size="9.1" text-anchor="middle" stroke="none"><text x="1646.9" y="298.28" fill="#189e18">N</text><text x="1692.68" y="218.18" fill="#189e18">N</text><text x="1718.68" y="252.68" fill="#189e18">Z</text><text x="1646.9" y="218.18" fill="#189e18">Y</text><text x="1693.15" y="298.28" fill="#189e18">O</text><text x="1646.9" y="324.98" fill="#189e18">R3</text><text x="1712.29" y="163.59" fill="#189e18">R4</text><text x="1765.29" y="157.08" fill="#189e18">R5</text><text x="1797.43" y="199.73" fill="#189e18">R6</text><text x="1776.56" y="248.88" fill="#189e18">R7</text></g><circle cx="1614.17" cy="261.96" r="3.07" fill="#ffe9e9" stroke="#ff8a8a" stroke-width="0.8"/><text x="1614.17" y="263.76" font-size="5.5" text-anchor="middle" fill="#ff5a5a" font-family="Liberation Sans,sans-serif">1</text><circle cx="1614.17" cy="276.91" r="3.07" fill="#ffe9e9" stroke="#ff8a8a" stroke-width="0.8"/><text x="1614.17" y="278.71" font-size="5.5" text-anchor="middle" fill="#ff5a5a" font-family="Liberation Sans,sans-serif">2</text><circle cx="1702.34" cy="243.41" r="3.07" fill="#ffe9e9" stroke="#ff8a8a" stroke-width="0.8"/><text x="1702.34" y="245.21" font-size="5.5" text-anchor="middle" fill="#ff5a5a" font-family="Liberation Sans,sans-serif">2</text><circle cx="1727.56" cy="235.72" r="3.07" fill="#ffe9e9" stroke="#ff8a8a" stroke-width="0.8"/><text x="1727.56" y="237.52" font-size="5.5" text-anchor="middle" fill="#ff5a5a" font-family="Liberation Sans,sans-serif">1</text><text x="1607.22" y="274.38" font-size="9.1" text-anchor="end" fill="#189e18" font-family="Liberation Sans,sans-serif">R1+R2</text><path d="M1623.78 253.95 L1618.44 257.15 M1623.78 280.65 L1618.44 277.45" stroke="#189e18" stroke-width="1.6" fill="none"/></svg>
<div class="t" style="left:1470px;top:342px;font-size:11px;letter-spacing:-0.027px;">Markush library size (without homologies): ~10</div>
<div class="t" style="left:1696px;top:339px;font-size:9px;letter-spacing:0.000px;">12</div>
<div class="b" style="left:1465px;top:360px;width:451px;height:1px;background:#606060;"></div>
<div class="b" style="left:0;top:0;width:1899px;height:818px;overflow:hidden;pointer-events:none"><div class="b" style="left:1472px;top:371px;width:440px;height:115px;border:1px solid #3c3c3c;"></div><div class="b" style="left:1476px;top:367px;width:61px;height:10px;background:#fff;"></div><div class="t" style="left:1477px;top:365px;font-size:11px;letter-spacing:-0.220px;">R1+R2 (R1)</div><div class="b" style="left:1472px;top:501px;width:440px;height:115px;border:1px solid #3c3c3c;"></div><div class="b" style="left:1476px;top:497px;width:10px;height:10px;background:#fff;"></div><div class="t" style="left:1477px;top:495px;font-size:11px;letter-spacing:-1.344px;">Y</div><div class="b" style="left:1472px;top:631px;width:440px;height:115px;border:1px solid #3c3c3c;"></div><div class="b" style="left:1476px;top:627px;width:10px;height:10px;background:#fff;"></div><div class="t" style="left:1477px;top:625px;font-size:11px;letter-spacing:-0.719px;">Z</div><div class="b" style="left:1472px;top:761px;width:440px;height:115px;border:1px solid #3c3c3c;"></div><div class="b" style="left:1476px;top:757px;width:17px;height:10px;background:#fff;"></div><div class="t" style="left:1477px;top:755px;font-size:11px;letter-spacing:-1.062px;">R3</div><div class="b" style="left:1578px;top:385px;width:1px;height:90px;background:#666;"></div><div class="b" style="left:1685px;top:385px;width:1px;height:90px;background:#666;"></div><div class="b" style="left:1792px;top:385px;width:1px;height:90px;background:#666;"></div><div class="b" style="left:1899px;top:385px;width:1px;height:90px;background:#666;"></div><div class="b" style="left:1578px;top:515px;width:1px;height:90px;background:#666;"></div><div class="b" style="left:1578px;top:645px;width:1px;height:90px;background:#666;"></div><div class="b" style="left:1578px;top:775px;width:1px;height:90px;background:#666;"></div><div class="b" style="left:1685px;top:775px;width:1px;height:90px;background:#666;"></div><div class="b" style="left:1792px;top:775px;width:1px;height:90px;background:#666;"></div><div class="b" style="left:1899px;top:775px;width:1px;height:90px;background:#666;"></div><div class="b" style="left:1476px;top:381px;width:98px;height:98px;background:#ccffcc;"></div><div class="b" style="left:1476px;top:641px;width:98px;height:98px;background:#ccffcc;"></div><div class="b" style="left:1476px;top:771px;width:98px;height:98px;background:#ccffcc;"></div><svg class="b" style="left:0px;top:0px;" width="1920" height="840" viewBox="0 0 1920 840"><g fill="none" stroke-width="1.3" stroke-linecap="round"><path d="M1526.1 395.3L1496.4 412.45" stroke="#111"/><path d="M1524.47 401.39L1502.49 414.08" stroke="#111"/><path d="M1526.1 395.3L1555.8 412.45" stroke="#111"/><path d="M1496.4 412.45L1496.4 426.04" stroke="#111"/><path d="M1496.4 426.04L1496.4 439.62" stroke="#2e3aa8"/><path d="M1502.57 450.31L1514.34 457.11" stroke="#2e3aa8"/><path d="M1514.34 457.11L1526.1 463.9" stroke="#111"/><path d="M1504.8 446.45L1514.63 452.13" stroke="#2e3aa8"/><path d="M1514.63 452.13L1524.47 457.81" stroke="#111"/><path d="M1526.1 463.9L1555.8 446.75" stroke="#111"/></g><g font-family="Liberation Sans,sans-serif" font-size="11.5" text-anchor="middle" stroke="none"><text x="1496.4" y="450.89" fill="#2e3aa8">N</text></g><path d="M1560.84 404.39 Q1558.3 404.68 1559.16 407.08 Q1560.02 409.48 1557.48 409.76 Q1554.95 410.05 1555.8 412.45 Q1556.66 414.85 1554.13 415.14 Q1551.59 415.42 1552.45 417.82 Q1553.3 420.22 1550.77 420.51" fill="none" stroke="#111" stroke-width="1.3" stroke-linecap="round"/><path d="M1550.77 438.69 Q1549.91 441.1 1552.45 441.38 Q1554.98 441.66 1554.13 444.06 Q1553.27 446.47 1555.8 446.75 Q1558.34 447.03 1557.48 449.44 Q1556.62 451.84 1559.16 452.12 Q1561.7 452.4 1560.84 454.81" fill="none" stroke="#111" stroke-width="1.3" stroke-linecap="round"/><circle cx="1552.4" cy="455.4" r="4.4" fill="#c9d8ee" stroke="#bcc8da" stroke-width="0.5"/><text x="1552.4" y="458.5" font-family="Liberation Sans,sans-serif" font-size="8.5" text-anchor="middle" fill="#111">2</text><g fill="none" stroke="#2a7de1" stroke-width="1.2" transform="translate(1566.5 389.4) rotate(35)"><rect x="-1.9" y="-5.4" width="3.8" height="6" rx="1.9"/><rect x="-1.9" y="-0.6" width="3.8" height="6" rx="1.9"/></g><g fill="none" stroke-width="1.3" stroke-linecap="round"><path d="M1631.1 393.3L1601.4 410.45" stroke="#111"/><path d="M1629.47 399.39L1607.49 412.08" stroke="#111"/><path d="M1631.1 393.3L1660.8 410.45" stroke="#111"/><path d="M1601.4 410.45L1601.4 444.75" stroke="#111"/><path d="M1601.4 444.75L1624.93 458.34" stroke="#111"/><path d="M1607.49 443.12L1627.15 454.47" stroke="#111"/><path d="M1637.27 458.34L1660.8 444.75" stroke="#111"/></g><g font-family="Liberation Sans,sans-serif" font-size="11.5" text-anchor="middle" stroke="none"><text x="1631.1" y="466.04" fill="#111">N</text></g><path d="M1665.84 402.39 Q1663.3 402.68 1664.16 405.08 Q1665.02 407.48 1662.48 407.76 Q1659.95 408.05 1660.8 410.45 Q1661.66 412.85 1659.13 413.14 Q1656.59 413.42 1657.45 415.82 Q1658.3 418.22 1655.77 418.51" fill="none" stroke="#111" stroke-width="1.3" stroke-linecap="round"/><path d="M1655.77 436.69 Q1654.91 439.1 1657.45 439.38 Q1659.98 439.66 1659.13 442.06 Q1658.27 444.47 1660.8 444.75 Q1663.34 445.03 1662.48 447.44 Q1661.62 449.84 1664.16 450.12 Q1666.7 450.4 1665.84 452.81" fill="none" stroke="#111" stroke-width="1.3" stroke-linecap="round"/><circle cx="1657.4" cy="453.4" r="4.4" fill="#c9d8ee" stroke="#bcc8da" stroke-width="0.5"/><text x="1657.4" y="456.5" font-family="Liberation Sans,sans-serif" font-size="8.5" text-anchor="middle" fill="#111">2</text><g fill="none" stroke="#2a7de1" stroke-width="1.2" transform="translate(1674.0 389.4) rotate(35)"><rect x="-1.9" y="-5.4" width="3.8" height="6" rx="1.9"/><rect x="-1.9" y="-0.6" width="3.8" height="6" rx="1.9"/></g><g fill="none" stroke-width="1.3" stroke-linecap="round"><path d="M1740.3 395.3L1710.6 412.45" stroke="#111"/><path d="M1738.67 401.39L1716.69 414.08" stroke="#111"/><path d="M1740.3 395.3L1770 412.45" stroke="#111"/><path d="M1710.6 412.45L1710.6 439.62" stroke="#111"/><path d="M1716.77 450.31L1740.3 463.9" stroke="#111"/><path d="M1740.3 463.9L1770 446.75" stroke="#111"/></g><g font-family="Liberation Sans,sans-serif" font-size="11.5" text-anchor="middle" stroke="none"><text x="1710.6" y="450.89" fill="#111">O</text></g><path d="M1775.04 404.39 Q1772.5 404.68 1773.36 407.08 Q1774.22 409.48 1771.68 409.76 Q1769.15 410.05 1770 412.45 Q1770.86 414.85 1768.33 415.14 Q1765.79 415.42 1766.65 417.82 Q1767.5 420.22 1764.97 420.51" fill="none" stroke="#111" stroke-width="1.3" stroke-linecap="round"/><path d="M1764.97 438.69 Q1764.11 441.1 1766.65 441.38 Q1769.18 441.66 1768.33 444.06 Q1767.47 446.47 1770 446.75 Q1772.54 447.03 1771.68 449.44 Q1770.82 451.84 1773.36 452.12 Q1775.9 452.4 1775.04 454.81" fill="none" stroke="#111" stroke-width="1.3" stroke-linecap="round"/><circle cx="1766.6" cy="455.4" r="4.4" fill="#c9d8ee" stroke="#bcc8da" stroke-width="0.5"/><text x="1766.6" y="458.5" font-family="Liberation Sans,sans-serif" font-size="8.5" text-anchor="middle" fill="#111">2</text><g fill="none" stroke="#2a7de1" stroke-width="1.2" transform="translate(1781.0 389.4) rotate(35)"><rect x="-1.9" y="-5.4" width="3.8" height="6" rx="1.9"/><rect x="-1.9" y="-0.6" width="3.8" height="6" rx="1.9"/></g><g fill="none" stroke-width="1.3" stroke-linecap="round"><path d="M1844.8 393.3L1815.1 410.45" stroke="#111"/><path d="M1843.17 399.39L1821.19 412.08" stroke="#111"/><path d="M1844.8 393.3L1874.5 410.45" stroke="#111"/><path d="M1815.1 410.45L1815.1 444.75" stroke="#111"/><path d="M1815.1 444.75L1838.63 458.34" stroke="#111"/><path d="M1850.97 458.34L1874.5 444.75" stroke="#111"/></g><g font-family="Liberation Sans,sans-serif" font-size="11.5" text-anchor="middle" stroke="none"><text x="1844.8" y="466.04" fill="#111">O</text></g><path d="M1879.54 402.39 Q1877 402.68 1877.86 405.08 Q1878.72 407.48 1876.18 407.76 Q1873.65 408.05 1874.5 410.45 Q1875.36 412.85 1872.83 413.14 Q1870.29 413.42 1871.15 415.82 Q1872 418.22 1869.47 418.51" fill="none" stroke="#111" stroke-width="1.3" stroke-linecap="round"/><path d="M1869.47 436.69 Q1868.61 439.1 1871.15 439.38 Q1873.68 439.66 1872.83 442.06 Q1871.97 444.47 1874.5 444.75 Q1877.04 445.03 1876.18 447.44 Q1875.32 449.84 1877.86 450.12 Q1880.4 450.4 1879.54 452.81" fill="none" stroke="#111" stroke-width="1.3" stroke-linecap="round"/><circle cx="1871.1" cy="453.4" r="4.4" fill="#c9d8ee" stroke="#bcc8da" stroke-width="0.5"/><text x="1871.1" y="456.5" font-family="Liberation Sans,sans-serif" font-size="8.5" text-anchor="middle" fill="#111">2</text><g fill="none" stroke="#2a7de1" stroke-width="1.2" transform="translate(1888.0 389.4) rotate(35)"><rect x="-1.9" y="-5.4" width="3.8" height="6" rx="1.9"/><rect x="-1.9" y="-0.6" width="3.8" height="6" rx="1.9"/></g><path d="M1493 545.5 Q1491 547.67 1493 549.83 Q1495 552 1493 554.17 Q1491 556.33 1493 558.5 Q1495 560.67 1493 562.83 Q1491 565 1493 567.17 Q1495 569.33 1493 571.5" fill="none" stroke="#111" stroke-width="1.5" stroke-linecap="round"/><path d="M1493.5 558.5 H1527.5" stroke="#111" stroke-width="1.5"/><text x="1531" y="564" font-family="Liberation Sans,sans-serif" font-size="13" fill="#111">NH</text><text x="1550.6" y="567.4" font-family="Liberation Sans,sans-serif" font-size="9" fill="#111">2</text><g fill="none" stroke-width="1.4"><path d="M1515 689.5 H1525" stroke="#111"/><path d="M1525 689.5 H1535" stroke="#2e3aa8"/><path d="M1544.6 681.6 L1551 670.4" stroke="#2e3aa8"/><path d="M1551 670.4 L1557.6 659" stroke="#111"/><path d="M1544.6 697.4 L1551 708.6" stroke="#2e3aa8"/><path d="M1551 708.6 L1557.6 720" stroke="#111"/></g><path d="M1548.73 653.47 Q1549.34 656.06 1551.82 655.11 Q1554.3 654.17 1554.91 656.76 Q1555.52 659.34 1558 658.4 Q1560.48 657.46 1561.09 660.04 Q1561.7 662.63 1564.18 661.69 Q1566.66 660.74 1567.27 663.33" fill="none" stroke="#111" stroke-width="1.3" stroke-linecap="round"/><path d="M1548.73 725.33 Q1551.21 726.27 1551.82 723.69 Q1552.43 721.1 1554.91 722.04 Q1557.39 722.99 1558 720.4 Q1558.61 717.81 1561.09 718.76 Q1563.57 719.7 1564.18 717.11 Q1564.79 714.53 1567.27 715.47" fill="none" stroke="#111" stroke-width="1.3" stroke-linecap="round"/><text x="1490" y="695" font-family="Liberation Sans,sans-serif" font-size="12.5" fill="#111" letter-spacing="0.6">R13</text><text x="1536" y="695" font-family="Liberation Sans,sans-serif" font-size="12.5" fill="#2e3aa8">N</text><circle cx="1548" cy="717" r="4.4" fill="#c9d8ee" stroke="#bcc8da" stroke-width="0.5"/><text x="1548" y="720.1" font-family="Liberation Sans,sans-serif" font-size="8.5" text-anchor="middle" fill="#111">2</text><path d="M1497 805.5 Q1494.6 807.67 1497 809.83 Q1499.4 812 1497 814.17 Q1494.6 816.33 1497 818.5 Q1499.4 820.67 1497 822.83 Q1494.6 825 1497 827.17 Q1499.4 829.33 1497 831.5" fill="none" stroke="#111" stroke-width="1.8" stroke-linecap="round"/><path d="M1602 805.5 Q1599.6 807.67 1602 809.83 Q1604.4 812 1602 814.17 Q1599.6 816.33 1602 818.5 Q1604.4 820.67 1602 822.83 Q1599.6 825 1602 827.17 Q1604.4 829.33 1602 831.5" fill="none" stroke="#111" stroke-width="1.8" stroke-linecap="round"/><text x="1542" y="825.6" font-family="Liberation Sans,sans-serif" font-size="13" fill="#111">H</text><text x="1641" y="825.6" font-family="Liberation Sans,sans-serif" font-size="13" fill="#111">OH</text><path d="M1730 809.5 H1752 M1834.5 809.5 H1857" stroke="#111" stroke-width="1.3"/><path d="M1763.5 816 L1767 819 M1870 816 L1873.5 819" stroke="#111" stroke-width="1.5"/><g font-family="Liberation Sans,sans-serif" font-size="11" fill="#111"><text x="1705" y="814" font-style="italic">alkyl</text><text x="1753.5" y="814">O</text><text x="1812.5" y="814" font-style="italic">aryl</text><text x="1858.5" y="814">O</text></g></svg></div>
<div class="b" style="left:1900px;top:362px;width:15px;height:457px;background:#f0f0f0;"></div>
<div class="b" style="left:1900px;top:378px;width:15px;height:87px;background:#cdcdcd;"></div>
<svg class="b" style="left:1900px;top:362px;" width="15" height="457" viewBox="0 0 15 457"><path d="M3.5 10 L7.5 6 L11.5 10 M3.5 446 L7.5 450 L11.5 446" fill="none" stroke="#505050" stroke-width="2"/></svg>
<div class="b" style="left:1465px;top:819px;width:451px;height:16px;background:#f0f0f0;"></div>
<div class="b" style="left:1482px;top:819px;width:55px;height:15px;background:#cdcdcd;"></div>
<svg class="b" style="left:1465px;top:819px;" width="451" height="16" viewBox="0 0 451 16"><path d="M10 3.5 L6 7.5 L10 11.5 M423 3.5 L427 7.5 L423 11.5" fill="none" stroke="#505050" stroke-width="2"/></svg>
<!-- p_bottom -->
<div class="b" style="left:1076px;top:838px;width:841px;height:177px;background:#f0f0f0;border:1px solid #8e97a3;border-top:1px solid #707070;"></div>
<div class="b" style="left:1077px;top:839px;width:140px;height:27px;background:#fff;"></div>
<div class="b" style="left:1217px;top:842px;width:69px;height:21px;background:#f0f0f0;border:1px solid #d4d4d4;"></div>
<div class="b" style="left:1285px;top:842px;width:91px;height:21px;background:#f0f0f0;border:1px solid #d4d4d4;"></div>
<svg class="b" style="left:1085px;top:843px;" width="16" height="16" viewBox="0 0 16 16"><path d="M2.6 10.6 L1 9.6 V3.6 L5.8 0.9 L8.2 2.2" fill="none" stroke="#3c3c3c" stroke-width="1.2" stroke-linejoin="round"/><path d="M8.6 2.9 L13.6 5.7 V11.3 L8.6 14.1 L3.7 11.3 V5.7 Z" fill="#fff" stroke="#3c3c3c" stroke-width="1.3" stroke-linejoin="round"/><path d="M10.6 7.2 Q8.6 5.8 7.2 7.4 Q6.3 8.6 7.2 9.8 Q8.6 11.3 10.6 9.9" fill="none" stroke="#3c3c3c" stroke-width="1.1"/></svg>
<div class="t" style="left:1104px;top:845px;font-size:11px;letter-spacing:-0.147px;">Exemplified Structures</div>
<svg class="b" style="left:1224px;top:846px;" width="16" height="14" viewBox="0 0 16 14"><circle cx="5.4" cy="9" r="3.6" fill="none" stroke="#3c3c3c" stroke-width="1.5"/><path d="M8 6.4 L10 4.2" stroke="#3c3c3c" stroke-width="1.5"/><text x="9.6" y="5.6" font-family="Liberation Sans,sans-serif" font-size="6.5" font-weight="bold" fill="#2a6fd0">R</text></svg>
<div class="t" style="left:1242px;top:847px;font-size:11px;letter-spacing:-0.188px;">Preview</div>
<svg class="b" style="left:1291px;top:844px;" width="18" height="18" viewBox="0 0 18 18"><text x="1" y="16.6" font-family="Liberation Serif,serif" font-size="12.5" fill="#3c3c3c">R</text><path d="M4.4 4.8 Q10.6 -2 16.8 4.8 Q10.6 9.8 4.4 4.8 Z" fill="#3c3c3c"/><circle cx="10.6" cy="4" r="2.2" fill="#f0f0f0"/><circle cx="10.9" cy="4.2" r="1.1" fill="#3c3c3c"/></svg>
<div class="t" style="left:1311px;top:847px;font-size:11px;letter-spacing:-0.274px;">Nesting View</div>
<div class="b" style="left:1112px;top:866px;width:802px;height:130px;background:#fff;border-left:1px solid #606060;border-top:1px solid #808080;"></div>
<svg class="b" style="left:0px;top:0px;" width="1120" height="1000" viewBox="0 0 1120 1000"><g fill="none" stroke="#3c3c3c"><rect x="1087.7" y="875.7" width="15" height="12.4" stroke-width="1.4"/><path d="M1087.7 880 H1102.7 M1087.7 884 H1102.7 M1092.7 875.7 V888 M1097.7 875.7 V888" stroke-width="1.2"/><path d="M1093 915.6 H1087.6 Q1086 915.6 1086 914 V905.6 Q1086 904 1087.6 904 H1093 L1096.6 907.6 V909" stroke-width="1.7" stroke-linejoin="round"/><path d="M1092.6 904.6 V908 H1096" stroke-width="1"/><path d="M1104 913.6 V919.6 L1099 922.6 L1094.2 919.8" stroke-width="1.7" stroke-linejoin="round"/><path d="M1099.2 910.6 L1104 913.4" stroke-width="1.7"/><path d="M1092.6 939.6 L1096.6 937.2 L1102.6 940.8 V948.6 L1096.6 952.2 L1091 948.8" stroke-width="1.7" stroke-linejoin="round"/><path d="M1099 966.4 H1089.4 Q1087.4 966.4 1087.4 968.4 V978.6 L1090.4 981.6 H1100 Q1102 981.6 1102 979.6 V973" stroke-width="1.8" stroke-linejoin="round"/><path d="M1091 967 V971 H1096 M1092.4 981 V976.4 H1098.8 V981" stroke-width="1.2"/><path d="M1098.4 970.6 L1105.6 963.4" stroke-width="2.4" stroke-linecap="round"/></g><path d="M1090 907.6 L1096.4 913.6" stroke="#0a63d0" stroke-width="1.3"/><path d="M1093.4 914.6 L1097.6 915 L1097.2 910.8 Z" fill="#0a63d0"/><path d="M1086 944.6 H1094" stroke="#0a63d0" stroke-width="2.4"/><path d="M1092.6 940.4 L1097.4 944.6 L1092.6 948.8 Z" fill="#0a63d0"/></svg>
<div class="b" style="left:1112px;top:866px;width:802px;height:130px;overflow:hidden"><div class="b" style="left:5px;top:4px;width:122px;height:122px;background:#ffcccc;"></div><div class="t" style="left:9px;top:6px;font-size:11px;color:#333;">1</div><div class="b" style="left:130px;top:8px;width:1px;height:115px;background:#606060;"></div><div class="b" style="left:135px;top:4px;width:122px;height:122px;background:#ffcccc;"></div><div class="t" style="left:139px;top:6px;font-size:11px;color:#333;">2</div><div class="b" style="left:260px;top:8px;width:1px;height:115px;background:#606060;"></div><div class="b" style="left:266px;top:4px;width:122px;height:122px;background:#ccffcc;"></div><div class="t" style="left:270px;top:6px;font-size:11px;color:#333;">3</div><div class="b" style="left:391px;top:8px;width:1px;height:115px;background:#606060;"></div><div class="b" style="left:397px;top:4px;width:122px;height:122px;background:#ccffcc;"></div><div class="t" style="left:401px;top:6px;font-size:11px;color:#333;">4</div><div class="b" style="left:522px;top:8px;width:1px;height:115px;background:#606060;"></div><div class="b" style="left:528px;top:4px;width:122px;height:122px;background:#ffcccc;"></div><div class="t" style="left:532px;top:6px;font-size:11px;color:#333;">5</div><div class="b" style="left:653px;top:8px;width:1px;height:115px;background:#606060;"></div><div class="b" style="left:659px;top:4px;width:122px;height:122px;background:#ccffcc;"></div><div class="t" style="left:663px;top:6px;font-size:11px;color:#333;">6</div><div class="b" style="left:784px;top:8px;width:1px;height:115px;background:#606060;"></div><div class="b" style="left:790px;top:4px;width:12px;height:122px;background:#ffcccc;"></div><div class="t" style="left:794px;top:6px;font-size:11px;color:#333;">7</div><svg class="b" style="left:0px;top:0px;" width="802" height="130" viewBox="0 0 802 130"><path d="M4 26 V4 H26 M104 4 H126 V26 M4 104 V126 H26 M104 126 H126 V104" fill="none" stroke="#0000ff" stroke-width="2" stroke-linecap="square"/><g fill="none" stroke-width="1.0" stroke-linecap="round"><path d="M55.36 92.34L60.97 89.1" stroke="#189e18"/><path d="M60.97 89.1L60.97 79.9" stroke="#189e18"/><path d="M62.81 87.81L62.81 81.19" stroke="#189e18"/><path d="M60.97 79.9L53 75.3" stroke="#189e18"/><path d="M53 75.3L45.03 79.9" stroke="#189e18"/><path d="M52.8 77.54L47.07 80.85" stroke="#189e18"/><path d="M45.03 79.9L45.03 89.1" stroke="#189e18"/><path d="M45.03 89.1L50.64 92.34" stroke="#189e18"/><path d="M44.57 88.3L38.96 91.54" stroke="#189e18"/><path d="M45.49 89.9L39.88 93.14" stroke="#189e18"/><path d="M60.97 89.1L68.93 93.7" stroke="#189e18"/><path d="M68.93 93.7L74.55 90.46" stroke="#189e18"/><path d="M69.13 91.46L73.63 88.87" stroke="#189e18"/><path d="M76.9 86.38L76.9 79.9" stroke="#189e18"/><path d="M76.9 79.9L68.93 75.3" stroke="#189e18"/><path d="M74.87 80.85L69.13 77.54" stroke="#189e18"/><path d="M68.93 75.3L60.97 79.9" stroke="#189e18"/><path d="M45.03 79.9L37.07 75.3" stroke="#189e18"/><path d="M37.07 75.3L31.15 77.94" stroke="#189e18"/><path d="M35.14 74.14L30.4 76.25" stroke="#189e18"/><path d="M26.84 77.02L22.5 72.21" stroke="#189e18"/><path d="M22.5 72.21L27.1 64.24" stroke="#189e18"/><path d="M21.56 70.17L24.87 64.43" stroke="#189e18"/><path d="M27.1 64.24L32.64 65.42" stroke="#189e18"/><path d="M36.47 69.67L37.07 75.3" stroke="#189e18"/><path d="M22.5 72.21L13.3 72.21" stroke="#189e18"/><path d="M13.3 72.21L8.7 64.24" stroke="#189e18"/><path d="M14.25 70.17L10.94 64.43" stroke="#189e18"/><path d="M8.7 64.24L13.3 56.27" stroke="#189e18"/><path d="M13.3 56.27L22.5 56.27" stroke="#189e18"/><path d="M14.59 58.11L21.22 58.11" stroke="#189e18"/><path d="M22.5 56.27L27.1 64.24" stroke="#189e18"/><path d="M53 75.3L53 72.06" stroke="#189e18"/><path d="M53 72.06L53 68.82" stroke="#3a2626"/><path d="M55.36 64.74L60.97 61.5" stroke="#3a2626"/><path d="M60.51 62.3L66.12 65.54" stroke="#3a2626"/><path d="M61.43 60.7L67.04 63.94" stroke="#3a2626"/><path d="M60.97 61.5L60.97 52.3" stroke="#3a2626"/><path d="M60.97 52.3L68.93 47.7" stroke="#3a2626"/><path d="M61.16 50.06L66.9 46.75" stroke="#3a2626"/><path d="M68.93 47.7L68.93 38.5" stroke="#3a2626"/><path d="M68.93 38.5L63.32 35.26" stroke="#3a2626"/><path d="M66.9 39.45L62.4 36.85" stroke="#3a2626"/><path d="M58.61 35.26L53 38.5" stroke="#3a2626"/><path d="M53 38.5L53 47.7" stroke="#3a2626"/><path d="M54.84 39.79L54.84 46.41" stroke="#3a2626"/><path d="M53 47.7L60.97 52.3" stroke="#3a2626"/><path d="M68.93 47.7L74.55 50.94" stroke="#3a2626"/><path d="M79.26 50.94L84.87 47.7" stroke="#3a2626"/><path d="M85.79 47.7L85.79 41.22" stroke="#3a2626"/><path d="M83.95 47.7L83.95 41.22" stroke="#3a2626"/><path d="M84.87 47.7L92.84 52.3" stroke="#3a2626"/><path d="M92.84 52.3L100.8 47.7" stroke="#3a2626"/><path d="M101.72 47.7L101.72 41.22" stroke="#3a2626"/><path d="M99.88 47.7L99.88 41.22" stroke="#3a2626"/><path d="M100.8 47.7L106.41 50.94" stroke="#3a2626"/><path d="M111.13 50.94L113.68 49.47" stroke="#3a2626"/></g><g font-family="Liberation Sans,sans-serif" font-size="3.4" text-anchor="middle" stroke="none"><text x="53" y="94.92" fill="#189e18">N</text><text x="53" y="98.32" font-size="3.4" fill="#189e18">H</text><text x="76.9" y="90.32" fill="#189e18">N</text><text x="28.66" y="80.27" fill="#189e18">N</text><text x="36.1" y="67.37" fill="#189e18">NH</text><text x="37.07" y="94.92" fill="#189e18">O</text><text x="53" y="67.32" fill="#3a2626">O</text><text x="68.93" y="67.32" fill="#3a2626">O</text><text x="60.97" y="35.12" fill="#3a2626">N</text><text x="76.9" y="53.52" fill="#3a2626">N</text><text x="76.9" y="56.92" font-size="3.4" fill="#3a2626">H</text><text x="84.87" y="39.72" fill="#3a2626">O</text><text x="100.8" y="39.72" fill="#3a2626">O</text><text x="108.77" y="53.52" fill="#3a2626">O</text><text x="116.74" y="48.92" fill="#3a2626">CH</text></g><g fill="none" stroke-width="1.15" stroke-linecap="round"><path d="M217.11 34.04L226.22 39.3" stroke="#189e18"/><path d="M226.22 39.3L226.22 53.3" stroke="#189e18"/><path d="M228.6 41.26L228.6 51.34" stroke="#189e18"/><path d="M226.22 53.3L214.1 60.3" stroke="#189e18"/><path d="M214.1 60.3L201.98 53.3" stroke="#189e18"/><path d="M213.59 57.26L204.86 52.22" stroke="#189e18"/><path d="M201.98 53.3L201.98 39.3" stroke="#189e18"/><path d="M201.98 39.3L211.09 34.04" stroke="#189e18"/><path d="M202.57 38.27L193.45 33.01" stroke="#189e18"/><path d="M201.38 40.33L192.26 35.07" stroke="#189e18"/><path d="M226.22 39.3L238.35 32.3" stroke="#189e18"/><path d="M238.35 32.3L247.47 37.56" stroke="#189e18"/><path d="M238.86 35.34L246.28 39.63" stroke="#189e18"/><path d="M250.47 42.77L250.47 53.3" stroke="#189e18"/><path d="M250.47 53.3L238.35 60.3" stroke="#189e18"/><path d="M247.59 52.22L238.86 57.26" stroke="#189e18"/><path d="M238.35 60.3L226.22 53.3" stroke="#189e18"/><path d="M201.98 53.3L189.85 60.3" stroke="#189e18"/><path d="M189.85 60.3L188.75 70.77" stroke="#189e18"/><path d="M187.28 62L186.38 70.52" stroke="#189e18"/><path d="M184.99 74.95L174.69 77.13" stroke="#189e18"/><path d="M174.69 77.13L167.69 65.01" stroke="#189e18"/><path d="M171.65 76.63L166.61 67.9" stroke="#189e18"/><path d="M167.69 65.01L174.04 57.96" stroke="#189e18"/><path d="M181.19 56.44L189.85 60.3" stroke="#189e18"/><path d="M174.69 77.13L167.69 89.26" stroke="#189e18"/><path d="M167.69 89.26L153.69 89.26" stroke="#189e18"/><path d="M165.73 86.88L155.65 86.88" stroke="#189e18"/><path d="M153.69 89.26L146.69 77.13" stroke="#189e18"/><path d="M146.69 77.13L153.69 65.01" stroke="#189e18"/><path d="M149.73 76.63L154.77 67.9" stroke="#189e18"/><path d="M153.69 65.01L167.69 65.01" stroke="#189e18"/><path d="M214.1 60.3L214.1 65.04" stroke="#189e18"/><path d="M214.1 65.04L214.1 69.79" stroke="#222"/><path d="M153.69 89.26L148.43 98.38" stroke="#189e18"/></g><g font-family="Liberation Sans,sans-serif" font-size="5.6" text-anchor="middle" stroke="none"><text x="214.1" y="34.32" fill="#189e18">N</text><text x="214.1" y="28.72" font-size="5.6" fill="#189e18">H</text><text x="250.47" y="41.32" fill="#189e18">N</text><text x="188.39" y="76.24" fill="#189e18">N</text><text x="177.06" y="56.62" fill="#189e18">NH</text><text x="189.85" y="34.32" fill="#189e18">O</text><text x="214.1" y="76.32" fill="#222">OH</text><text x="146.69" y="103.4" fill="#189e18">C</text><text x="140.81" y="103.4" font-size="5.6" fill="#189e18">H</text><text x="143.61" y="104.27" font-size="3.36" fill="#189e18">3</text></g><g fill="none" stroke-width="1.15" stroke-linecap="round"><path d="M345.61 89.15L350.42 86.38" stroke="#3a44b8"/><path d="M350.42 86.38L355.23 83.6" stroke="#26331f"/><path d="M355.23 83.6L355.23 68.9" stroke="#26331f"/><path d="M357.73 81.54L357.73 70.96" stroke="#26331f"/><path d="M355.23 68.9L342.5 61.55" stroke="#26331f"/><path d="M342.5 61.55L329.77 68.9" stroke="#26331f"/><path d="M341.97 64.74L332.8 70.04" stroke="#26331f"/><path d="M329.77 68.9L329.77 83.6" stroke="#26331f"/><path d="M329.77 83.6L334.58 86.38" stroke="#26331f"/><path d="M334.58 86.38L339.39 89.15" stroke="#3a44b8"/><path d="M329.14 82.52L324.34 85.29" stroke="#26331f"/><path d="M324.34 85.29L319.53 88.07" stroke="#ff2a2a"/><path d="M330.39 84.68L325.59 87.46" stroke="#26331f"/><path d="M325.59 87.46L320.78 90.23" stroke="#ff2a2a"/><path d="M355.23 83.6L367.96 90.95" stroke="#26331f"/><path d="M367.96 90.95L372.77 88.17" stroke="#26331f"/><path d="M372.77 88.17L377.58 85.4" stroke="#3a44b8"/><path d="M368.49 87.76L372.41 85.5" stroke="#26331f"/><path d="M372.41 85.5L376.33 83.23" stroke="#3a44b8"/><path d="M380.69 80L380.69 74.45" stroke="#3a44b8"/><path d="M380.69 74.45L380.69 68.9" stroke="#26331f"/><path d="M380.69 68.9L367.96 61.55" stroke="#26331f"/><path d="M377.66 70.04L368.49 64.74" stroke="#26331f"/><path d="M367.96 61.55L355.23 68.9" stroke="#26331f"/><path d="M329.77 68.9L317.04 61.55" stroke="#26331f"/><path d="M317.04 61.55L311.97 63.81" stroke="#26331f"/><path d="M311.97 63.81L306.89 66.07" stroke="#3a44b8"/><path d="M314.14 60.1L310.01 61.94" stroke="#26331f"/><path d="M310.01 61.94L305.88 63.78" stroke="#3a44b8"/><path d="M301.2 64.86L297.49 60.73" stroke="#3a44b8"/><path d="M297.49 60.73L293.77 56.6" stroke="#26331f"/><path d="M293.77 56.6L301.12 43.87" stroke="#26331f"/><path d="M292.64 53.57L297.93 44.41" stroke="#26331f"/><path d="M301.12 43.87L306.03 44.92" stroke="#26331f"/><path d="M306.03 44.92L310.93 45.96" stroke="#3a44b8"/><path d="M315.99 51.58L316.51 56.56" stroke="#3a44b8"/><path d="M316.51 56.56L317.04 61.55" stroke="#26331f"/><path d="M293.77 56.6L279.07 56.6" stroke="#26331f"/><path d="M279.07 56.6L271.72 43.87" stroke="#26331f"/><path d="M280.21 53.57L274.92 44.41" stroke="#26331f"/><path d="M271.72 43.87L279.07 31.14" stroke="#26331f"/><path d="M279.07 31.14L293.77 31.14" stroke="#26331f"/><path d="M281.13 33.64L291.72 33.64" stroke="#26331f"/><path d="M293.77 31.14L301.12 43.87" stroke="#26331f"/><path d="M342.5 61.55L342.5 56.54" stroke="#26331f"/><path d="M342.5 56.54L342.5 51.52" stroke="#3a44b8"/></g><g font-family="Liberation Sans,sans-serif" font-size="5.8" text-anchor="middle" stroke="none"><text x="342.5" y="93.04" fill="#3a44b8">N</text><text x="342.5" y="98.84" font-size="5.8" fill="#3a44b8">H</text><text x="380.69" y="85.69" fill="#3a44b8">N</text><text x="303.61" y="69.62" fill="#3a44b8">N</text><text x="315.5" y="49.02" fill="#3a44b8">NH</text><text x="317.04" y="93.04" fill="#ff2a2a">O</text><text x="342.5" y="48.94" fill="#3a44b8">NH</text><text x="348.59" y="49.84" font-size="3.48" fill="#3a44b8">2</text></g><g fill="none" stroke-width="1.15" stroke-linecap="round"><path d="M478.41 34.14L482.97 36.77" stroke="#3a44b8"/><path d="M482.97 36.77L487.52 39.4" stroke="#26331f"/><path d="M487.52 39.4L487.52 53.4" stroke="#26331f"/><path d="M489.9 41.36L489.9 51.44" stroke="#26331f"/><path d="M487.52 53.4L475.4 60.4" stroke="#26331f"/><path d="M475.4 60.4L463.28 53.4" stroke="#26331f"/><path d="M474.89 57.36L466.16 52.32" stroke="#26331f"/><path d="M463.28 53.4L463.28 39.4" stroke="#26331f"/><path d="M463.28 39.4L467.83 36.77" stroke="#26331f"/><path d="M467.83 36.77L472.39 34.14" stroke="#3a44b8"/><path d="M463.87 38.37L459.31 35.74" stroke="#26331f"/><path d="M459.31 35.74L454.75 33.11" stroke="#ff2a2a"/><path d="M462.68 40.43L458.12 37.8" stroke="#26331f"/><path d="M458.12 37.8L453.56 35.17" stroke="#ff2a2a"/><path d="M487.52 39.4L499.65 32.4" stroke="#26331f"/><path d="M499.65 32.4L504.21 35.03" stroke="#26331f"/><path d="M504.21 35.03L508.77 37.66" stroke="#3a44b8"/><path d="M500.16 35.44L503.87 37.58" stroke="#26331f"/><path d="M503.87 37.58L507.58 39.73" stroke="#3a44b8"/><path d="M511.77 42.87L511.77 48.14" stroke="#3a44b8"/><path d="M511.77 48.14L511.77 53.4" stroke="#26331f"/><path d="M511.77 53.4L499.65 60.4" stroke="#26331f"/><path d="M508.89 52.32L500.16 57.36" stroke="#26331f"/><path d="M499.65 60.4L487.52 53.4" stroke="#26331f"/><path d="M463.28 53.4L451.15 60.4" stroke="#26331f"/><path d="M451.15 60.4L450.6 65.64" stroke="#26331f"/><path d="M450.6 65.64L450.05 70.87" stroke="#3a44b8"/><path d="M448.58 62.1L448.13 66.36" stroke="#26331f"/><path d="M448.13 66.36L447.68 70.62" stroke="#3a44b8"/><path d="M446.29 75.05L441.14 76.14" stroke="#3a44b8"/><path d="M441.14 76.14L435.99 77.23" stroke="#26331f"/><path d="M435.99 77.23L428.99 65.11" stroke="#26331f"/><path d="M432.95 76.73L427.91 68" stroke="#26331f"/><path d="M428.99 65.11L432.17 61.58" stroke="#26331f"/><path d="M432.17 61.58L435.34 58.06" stroke="#3a44b8"/><path d="M442.49 56.54L446.82 58.47" stroke="#3a44b8"/><path d="M446.82 58.47L451.15 60.4" stroke="#26331f"/><path d="M435.99 77.23L428.99 89.36" stroke="#26331f"/><path d="M428.99 89.36L414.99 89.36" stroke="#26331f"/><path d="M427.03 86.98L416.95 86.98" stroke="#26331f"/><path d="M414.99 89.36L407.99 77.23" stroke="#26331f"/><path d="M407.99 77.23L414.99 65.11" stroke="#26331f"/><path d="M411.03 76.73L416.07 68" stroke="#26331f"/><path d="M414.99 65.11L428.99 65.11" stroke="#26331f"/><path d="M475.4 60.4L475.4 65.14" stroke="#26331f"/><path d="M475.4 65.14L475.4 69.89" stroke="#3a44b8"/><path d="M414.99 89.36L409.73 98.48" stroke="#26331f"/></g><g font-family="Liberation Sans,sans-serif" font-size="5.6" text-anchor="middle" stroke="none"><text x="475.4" y="34.42" fill="#3a44b8">N</text><text x="475.4" y="28.82" font-size="5.6" fill="#3a44b8">H</text><text x="511.77" y="41.42" fill="#3a44b8">N</text><text x="449.69" y="76.34" fill="#3a44b8">N</text><text x="438.36" y="56.72" fill="#3a44b8">NH</text><text x="451.15" y="34.42" fill="#ff2a2a">O</text><text x="475.4" y="76.42" fill="#3a44b8">NH</text><text x="481.28" y="77.29" font-size="3.36" fill="#3a44b8">2</text><text x="407.99" y="103.5" fill="#26331f">C</text><text x="402.11" y="103.5" font-size="5.6" fill="#26331f">H</text><text x="404.91" y="104.37" font-size="3.36" fill="#26331f">3</text></g><g fill="none" stroke-width="1.0" stroke-linecap="round"><path d="M622.61 93.64L628.48 90.25" stroke="#189e18"/><path d="M628.48 90.25L628.48 80.75" stroke="#189e18"/><path d="M630.38 88.92L630.38 82.08" stroke="#189e18"/><path d="M628.48 80.75L620.25 76" stroke="#189e18"/><path d="M620.25 76L612.02 80.75" stroke="#189e18"/><path d="M620.05 78.31L614.12 81.73" stroke="#189e18"/><path d="M612.02 80.75L612.02 90.25" stroke="#189e18"/><path d="M612.02 90.25L617.89 93.64" stroke="#189e18"/><path d="M611.55 89.43L605.68 92.82" stroke="#189e18"/><path d="M612.5 91.07L606.63 94.46" stroke="#189e18"/><path d="M628.48 90.25L636.7 95" stroke="#189e18"/><path d="M636.7 95L642.58 91.61" stroke="#189e18"/><path d="M636.91 92.69L641.63 89.96" stroke="#189e18"/><path d="M644.93 87.53L644.93 80.75" stroke="#189e18"/><path d="M644.93 80.75L636.7 76" stroke="#189e18"/><path d="M642.83 81.73L636.91 78.31" stroke="#189e18"/><path d="M636.7 76L628.48 80.75" stroke="#189e18"/><path d="M612.02 80.75L603.8 76" stroke="#189e18"/><path d="M603.8 76L597.6 78.76" stroke="#189e18"/><path d="M601.81 74.81L596.83 77.02" stroke="#189e18"/><path d="M593.3 77.84L588.76 72.8" stroke="#189e18"/><path d="M588.76 72.8L593.51 64.58" stroke="#189e18"/><path d="M587.78 70.7L591.2 64.78" stroke="#189e18"/><path d="M593.51 64.58L599.34 65.82" stroke="#189e18"/><path d="M603.17 70.07L603.8 76" stroke="#189e18"/><path d="M588.76 72.8L579.26 72.8" stroke="#189e18"/><path d="M579.26 72.8L574.51 64.58" stroke="#189e18"/><path d="M580.24 70.7L576.82 64.78" stroke="#189e18"/><path d="M574.51 64.58L579.26 56.35" stroke="#189e18"/><path d="M579.26 56.35L588.76 56.35" stroke="#189e18"/><path d="M580.59 58.25L587.43 58.25" stroke="#189e18"/><path d="M588.76 56.35L593.51 64.58" stroke="#189e18"/><path d="M620.25 76L620.25 70.04" stroke="#189e18"/><path d="M574.51 64.58L567.73 64.58" stroke="#189e18"/><path d="M563.65 62.22L560.26 56.35" stroke="#189e18"/><path d="M560.26 56.35L550.76 56.35" stroke="#189e18"/><path d="M550.76 56.35L547.37 50.48" stroke="#189e18"/><path d="M547.37 45.77L550.76 39.9" stroke="#241a1a"/><path d="M550.76 39.9L546.01 31.67" stroke="#241a1a"/><path d="M546.01 31.67L539.23 31.67" stroke="#241a1a"/><path d="M535.15 34.02L531.76 39.9" stroke="#241a1a"/><path d="M531.76 39.9L536.51 48.12" stroke="#241a1a"/><path d="M536.51 48.12L543.29 48.12" stroke="#241a1a"/></g><g font-family="Liberation Sans,sans-serif" font-size="3.4" text-anchor="middle" stroke="none"><text x="620.25" y="96.22" fill="#189e18">N</text><text x="620.25" y="99.62" font-size="3.4" fill="#189e18">H</text><text x="644.93" y="91.47" fill="#189e18">N</text><text x="595.12" y="81.09" fill="#189e18">N</text><text x="602.8" y="67.78" fill="#189e18">NH</text><text x="603.8" y="96.22" fill="#189e18">O</text><text x="620.25" y="67.72" fill="#189e18">NH</text><text x="623.82" y="68.25" font-size="2.04" fill="#189e18">2</text><text x="565.01" y="65.8" fill="#189e18">O</text><text x="546.01" y="49.35" fill="#189e18">N</text><text x="536.51" y="32.89" fill="#241a1a">O</text></g><g fill="none" stroke-width="1.1" stroke-linecap="round"><path d="M746.98 34.55L750.54 36.6" stroke="#3a44b8"/><path d="M750.54 36.6L754.09 38.65" stroke="#26331f"/><path d="M754.09 38.65L754.09 49.95" stroke="#26331f"/><path d="M756.01 40.23L756.01 48.37" stroke="#26331f"/><path d="M754.09 49.95L744.3 55.6" stroke="#26331f"/><path d="M744.3 55.6L734.51 49.95" stroke="#26331f"/><path d="M743.89 53.15L736.84 49.08" stroke="#26331f"/><path d="M734.51 49.95L734.51 38.65" stroke="#26331f"/><path d="M734.51 38.65L738.06 36.6" stroke="#26331f"/><path d="M738.06 36.6L741.62 34.55" stroke="#3a44b8"/><path d="M734.99 37.82L731.44 35.77" stroke="#26331f"/><path d="M731.44 35.77L727.89 33.72" stroke="#ff2a2a"/><path d="M734.03 39.48L730.48 37.43" stroke="#26331f"/><path d="M730.48 37.43L726.93 35.38" stroke="#ff2a2a"/><path d="M754.09 38.65L763.87 33" stroke="#26331f"/><path d="M763.87 33L767.42 35.05" stroke="#26331f"/><path d="M767.42 35.05L770.97 37.1" stroke="#3a44b8"/><path d="M764.28 35.45L767.15 37.11" stroke="#26331f"/><path d="M767.15 37.11L770.01 38.76" stroke="#3a44b8"/><path d="M773.66 41.75L773.66 45.85" stroke="#3a44b8"/><path d="M773.66 45.85L773.66 49.95" stroke="#26331f"/><path d="M773.66 49.95L763.87 55.6" stroke="#26331f"/><path d="M771.33 49.08L764.28 53.15" stroke="#26331f"/><path d="M763.87 55.6L754.09 49.95" stroke="#26331f"/><path d="M734.51 49.95L724.73 55.6" stroke="#26331f"/><path d="M724.73 55.6L724.3 59.68" stroke="#26331f"/><path d="M724.3 59.68L723.87 63.76" stroke="#3a44b8"/><path d="M722.65 56.97L722.31 60.26" stroke="#26331f"/><path d="M722.31 60.26L721.96 63.55" stroke="#3a44b8"/><path d="M720.51 67.48L716.5 68.34" stroke="#3a44b8"/><path d="M716.5 68.34L712.49 69.19" stroke="#26331f"/><path d="M712.49 69.19L706.84 59.4" stroke="#26331f"/><path d="M710.04 68.78L705.97 61.73" stroke="#26331f"/><path d="M706.84 59.4L709.28 56.7" stroke="#26331f"/><path d="M709.28 56.7L711.71 54" stroke="#3a44b8"/><path d="M718.09 52.64L721.41 54.12" stroke="#3a44b8"/><path d="M721.41 54.12L724.73 55.6" stroke="#26331f"/><path d="M712.49 69.19L706.84 78.97" stroke="#26331f"/><path d="M706.84 78.97L695.54 78.97" stroke="#26331f"/><path d="M705.26 77.05L697.13 77.05" stroke="#26331f"/><path d="M695.54 78.97L689.89 69.19" stroke="#26331f"/><path d="M689.89 69.19L695.54 59.4" stroke="#26331f"/><path d="M692.35 68.78L696.42 61.73" stroke="#26331f"/><path d="M695.54 59.4L706.84 59.4" stroke="#26331f"/><path d="M744.3 55.6L744.3 59.23" stroke="#26331f"/><path d="M744.3 59.23L744.3 62.87" stroke="#3a44b8"/><path d="M695.54 78.97L689.89 88.76" stroke="#26331f"/><path d="M689.06 89.24L691.11 92.79" stroke="#26331f"/><path d="M691.11 92.79L693.16 96.34" stroke="#ff2a2a"/><path d="M690.73 88.28L692.78 91.83" stroke="#26331f"/><path d="M692.78 91.83L694.83 95.38" stroke="#ff2a2a"/><path d="M689.89 88.76L685.79 88.76" stroke="#26331f"/><path d="M685.79 88.76L681.69 88.76" stroke="#3a44b8"/><path d="M677.04 86.07L675.77 83.87" stroke="#3a44b8"/><path d="M675.77 83.87L674.49 81.66" stroke="#26331f"/><path d="M677.04 91.44L675.77 93.65" stroke="#3a44b8"/><path d="M675.77 93.65L674.49 95.86" stroke="#26331f"/></g><g font-family="Liberation Sans,sans-serif" font-size="5" text-anchor="middle" stroke="none"><text x="744.3" y="34.8" fill="#3a44b8">N</text><text x="744.3" y="29.8" font-size="5" fill="#3a44b8">H</text><text x="773.66" y="40.45" fill="#3a44b8">N</text><text x="723.55" y="68.64" fill="#3a44b8">N</text><text x="714.4" y="52.8" fill="#3a44b8">NH</text><text x="724.73" y="34.8" fill="#ff2a2a">O</text><text x="744.3" y="68.7" fill="#3a44b8">NH</text><text x="749.55" y="69.48" font-size="3" fill="#3a44b8">2</text><text x="695.54" y="100.35" fill="#ff2a2a">O</text><text x="678.59" y="90.56" fill="#3a44b8">N</text><text x="672.94" y="80.77" fill="#26331f">C</text><text x="667.69" y="80.77" font-size="5" fill="#26331f">H</text><text x="670.19" y="81.55" font-size="3" fill="#26331f">3</text><text x="672.94" y="100.35" fill="#26331f">C</text><text x="667.69" y="100.35" font-size="5" fill="#26331f">H</text><text x="670.19" y="101.13" font-size="3" fill="#26331f">3</text></g><path d="M802 40 L797.4000000000001 48 L802 56" fill="none" stroke="#189e18" stroke-width="1"/></svg></div>
<div class="t" style="left:1147px;top:998px;font-size:11px;letter-spacing:-0.023px;color:#c00000;">Matching: 3 / 21</div>
<div class="b" style="left:1262px;top:997px;width:1px;height:16px;background:#a0a0a0;"></div>
<div class="t" style="left:1285px;top:998px;font-size:11px;letter-spacing:-0.009px;">Selected: 1</div>
<div class="b" style="left:1380px;top:996px;width:150px;height:15px;background:#cdcdcd;"></div>
<svg class="b" style="left:1366px;top:996px;" width="548" height="16" viewBox="0 0 548 16"><path d="M7.5 3.5 L4 7 L7.5 10.5 M536.5 3.5 L540 7 L536.5 10.5" fill="none" stroke="#444" stroke-width="2"/></svg>
<div class="b" style="left:1112px;top:996px;width:1px;height:17px;background:#606060;"></div>
</body></html>
